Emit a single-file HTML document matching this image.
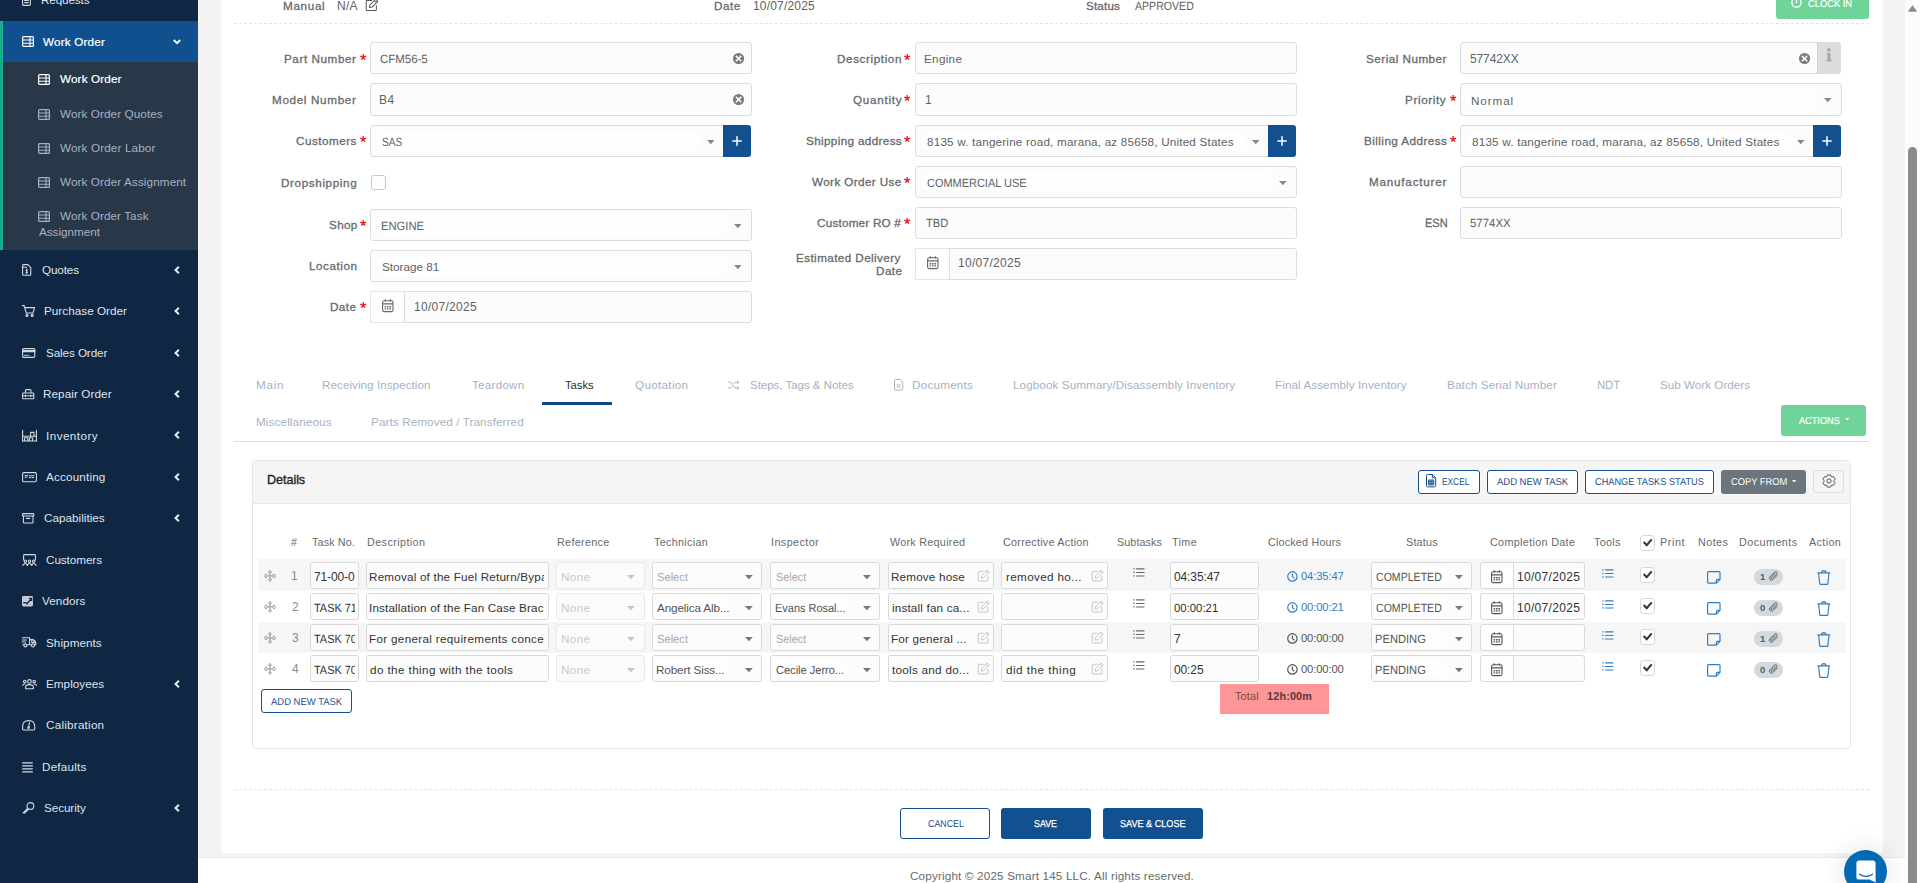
<!DOCTYPE html>
<html><head><meta charset="utf-8"><title>Work Order</title>
<style>
html,body{margin:0;padding:0;}
body{width:1920px;height:883px;overflow:hidden;position:relative;background:#f3f3f4;font-family:'Liberation Sans', sans-serif;}
#r{position:absolute;left:0;top:0;width:1920px;height:883px;overflow:hidden;}
#r div,#r span,#r svg{position:absolute;box-sizing:border-box;}
#r span{white-space:pre;line-height:1;font-family:'Liberation Sans', sans-serif;}
#r svg{overflow:visible;}
</style></head><body><div id="r">
<div style="left:0px;top:0px;width:198px;height:883px;background:#0f2743;"></div>
<div style="left:221px;top:0px;width:1662px;height:853px;background:#fff;"></div>
<div style="left:198px;top:857px;width:1707px;height:26px;background:#fff;border-top:1px solid #e7eaec;"></div>
<div style="left:1905px;top:0px;width:15px;height:883px;background:#fcfcfc;"></div>
<div style="left:1908px;top:147px;width:9px;height:760px;background:#8b8b8b;border-radius:5px;"></div>
<svg style="left:1908px;top:5px" width="9" height="7" viewBox="0 0 9 7" ><path d="M4.5 0.3 L8.8 6 Q9 6.8 8 6.8 L1 6.8 Q0 6.8 0.2 6 Z" fill="#8b8b8b"/></svg>
<div style="left:0px;top:21px;width:198px;height:41px;background:#11508f;"></div>
<div style="left:0px;top:62px;width:198px;height:188px;background:#283848;"></div>
<div style="left:0px;top:21px;width:3px;height:229px;background:#1aab8a;"></div>
<svg style="left:174.2px;top:265.7px" width="6" height="8" viewBox="0 0 6 8" ><path d="M4.9 0.7 L1.5 4 L4.9 7.3" fill="none" stroke="#e6eaf0" stroke-width="2.0" stroke-linecap="butt"/></svg>
<svg style="left:174.2px;top:307.09999999999997px" width="6" height="8" viewBox="0 0 6 8" ><path d="M4.9 0.7 L1.5 4 L4.9 7.3" fill="none" stroke="#e6eaf0" stroke-width="2.0" stroke-linecap="butt"/></svg>
<svg style="left:174.2px;top:348.5px" width="6" height="8" viewBox="0 0 6 8" ><path d="M4.9 0.7 L1.5 4 L4.9 7.3" fill="none" stroke="#e6eaf0" stroke-width="2.0" stroke-linecap="butt"/></svg>
<svg style="left:174.2px;top:389.9px" width="6" height="8" viewBox="0 0 6 8" ><path d="M4.9 0.7 L1.5 4 L4.9 7.3" fill="none" stroke="#e6eaf0" stroke-width="2.0" stroke-linecap="butt"/></svg>
<svg style="left:174.2px;top:431.3px" width="6" height="8" viewBox="0 0 6 8" ><path d="M4.9 0.7 L1.5 4 L4.9 7.3" fill="none" stroke="#e6eaf0" stroke-width="2.0" stroke-linecap="butt"/></svg>
<svg style="left:174.2px;top:472.7px" width="6" height="8" viewBox="0 0 6 8" ><path d="M4.9 0.7 L1.5 4 L4.9 7.3" fill="none" stroke="#e6eaf0" stroke-width="2.0" stroke-linecap="butt"/></svg>
<svg style="left:174.2px;top:514.1px" width="6" height="8" viewBox="0 0 6 8" ><path d="M4.9 0.7 L1.5 4 L4.9 7.3" fill="none" stroke="#e6eaf0" stroke-width="2.0" stroke-linecap="butt"/></svg>
<svg style="left:174.2px;top:679.7px" width="6" height="8" viewBox="0 0 6 8" ><path d="M4.9 0.7 L1.5 4 L4.9 7.3" fill="none" stroke="#e6eaf0" stroke-width="2.0" stroke-linecap="butt"/></svg>
<svg style="left:174.2px;top:803.9000000000001px" width="6" height="8" viewBox="0 0 6 8" ><path d="M4.9 0.7 L1.5 4 L4.9 7.3" fill="none" stroke="#e6eaf0" stroke-width="2.0" stroke-linecap="butt"/></svg>
<svg style="left:172.7px;top:38.9px" width="8" height="6" viewBox="0 0 8 6" ><path d="M0.8 1.0 L4 4.2 L7.2 1.0" fill="none" stroke="#fff" stroke-width="1.9"/></svg>
<svg style="left:22px;top:36px" width="12" height="11" viewBox="0 0 12 11" ><rect x="0.6" y="0.6" width="10.8" height="9.8" rx="1" fill="none" stroke="#fff" stroke-width="1.2"/><path d="M0.6 4 H11.4 M0.6 7.2 H11.4 M8 0.6 V10.4" stroke="#fff" stroke-width="1.1" fill="none"/></svg>
<svg style="left:38.2px;top:73.5px" width="12" height="11" viewBox="0 0 12 11" ><rect x="0.6" y="0.6" width="10.8" height="9.8" rx="1" fill="none" stroke="#fff" stroke-width="1.2"/><path d="M0.6 4 H11.4 M0.6 7.2 H11.4 M8 0.6 V10.4" stroke="#fff" stroke-width="1.1" fill="none"/></svg>
<svg style="left:38.2px;top:108.5px" width="12" height="11" viewBox="0 0 12 11" ><rect x="0.6" y="0.6" width="10.8" height="9.8" rx="1" fill="none" stroke="#a7b1c2" stroke-width="1.2"/><path d="M0.6 4 H11.4 M0.6 7.2 H11.4 M8 0.6 V10.4" stroke="#a7b1c2" stroke-width="1.1" fill="none"/></svg>
<svg style="left:38.2px;top:142.5px" width="12" height="11" viewBox="0 0 12 11" ><rect x="0.6" y="0.6" width="10.8" height="9.8" rx="1" fill="none" stroke="#a7b1c2" stroke-width="1.2"/><path d="M0.6 4 H11.4 M0.6 7.2 H11.4 M8 0.6 V10.4" stroke="#a7b1c2" stroke-width="1.1" fill="none"/></svg>
<svg style="left:38.2px;top:176.5px" width="12" height="11" viewBox="0 0 12 11" ><rect x="0.6" y="0.6" width="10.8" height="9.8" rx="1" fill="none" stroke="#a7b1c2" stroke-width="1.2"/><path d="M0.6 4 H11.4 M0.6 7.2 H11.4 M8 0.6 V10.4" stroke="#a7b1c2" stroke-width="1.1" fill="none"/></svg>
<svg style="left:38.2px;top:210.5px" width="12" height="11" viewBox="0 0 12 11" ><rect x="0.6" y="0.6" width="10.8" height="9.8" rx="1" fill="none" stroke="#a7b1c2" stroke-width="1.2"/><path d="M0.6 4 H11.4 M0.6 7.2 H11.4 M8 0.6 V10.4" stroke="#a7b1c2" stroke-width="1.1" fill="none"/></svg>
<svg style="left:22px;top:-6px" width="9" height="12" viewBox="0 0 9 12" ><g fill="none" stroke="#d3d9e3" stroke-width="1.1" stroke-linejoin="round" stroke-linecap="round"><rect x="0.6" y="0.6" width="7.8" height="10.8" rx="1.2"/><path d="M2.6 6.4 H6.4 M2.6 8.6 H6.4"/></g></svg>
<svg style="left:22px;top:264px" width="9.4" height="11.8" viewBox="0 0 9.4 11.8" ><g fill="none" stroke="#d3d9e3" stroke-width="1.1" stroke-linejoin="round" stroke-linecap="round"><path d="M1.6 0.6 H5.8 L8.8 3.6 V10.2 Q8.8 11.2 7.8 11.2 H1.6 Q0.6 11.2 0.6 10.2 V1.6 Q0.6 0.6 1.6 0.6 Z"/><path d="M1 3.2 H4.6" /><path d="M5.6 6.2 Q4.7 5.4 3.9 6 Q3.3 6.8 4.7 7.4 Q6.1 8 5.4 8.9 Q4.6 9.5 3.7 8.7 M4.7 5 V10" stroke-width="0.9"/></g></svg>
<svg style="left:22px;top:305px" width="13.4" height="12" viewBox="0 0 13.4 12" ><g fill="none" stroke="#d3d9e3" stroke-width="1.1" stroke-linejoin="round" stroke-linecap="round"><path d="M0.5 0.6 H2.2 L4.2 8 H11 L12.6 2.6 H3"/><circle cx="5" cy="10.4" r="1"/><circle cx="10.2" cy="10.4" r="1"/></g></svg>
<svg style="left:22px;top:348px" width="13.4" height="10" viewBox="0 0 13.4 10" ><g fill="none" stroke="#d3d9e3" stroke-width="1.1" stroke-linejoin="round" stroke-linecap="round"><rect x="0.6" y="0.6" width="12.2" height="8.8" rx="1.2"/><path d="M0.6 2.6 H12.8 M0.6 3.6 H12.8" stroke-width="1.3"/><path d="M2.4 7.2 H4.6 M5.8 7.2 H7"/></g></svg>
<svg style="left:22px;top:389px" width="12.4" height="10.4" viewBox="0 0 12.4 10.4" ><g fill="none" stroke="#d3d9e3" stroke-width="1.1" stroke-linejoin="round" stroke-linecap="round"><path d="M1.4 4 H11 Q11.8 4 11.8 4.8 V9 Q11.8 9.8 11 9.8 H1.4 Q0.6 9.8 0.6 9 V4.8 Q0.6 4 1.4 4 Z M3.4 4 V1.6 Q3.4 0.6 4.4 0.6 H8 Q9 0.6 9 1.6 V4 M0.6 6.8 H11.8 M3.6 6 V7.8 M8.8 6 V7.8"/></g></svg>
<svg style="left:22px;top:430px" width="15" height="11.6" viewBox="0 0 15 11.6" ><g fill="none" stroke="#d3d9e3" stroke-width="1.1" stroke-linejoin="round" stroke-linecap="round"><path d="M0.6 0.4 V11.2 M14.4 0.4 V11.2 M0.6 11 H14.4 M0.6 6.2 H14.4 M2.6 11 V7.8 H5.8 V11 M7.4 11 V7.8 H10.6 V11 M8.6 6.2 V2.4 H12 V6.2"/></g></svg>
<svg style="left:22px;top:472px" width="15" height="10.4" viewBox="0 0 15 10.4" ><g fill="none" stroke="#d3d9e3" stroke-width="1.1" stroke-linejoin="round" stroke-linecap="round"><rect x="0.6" y="0.6" width="13.8" height="9.2" rx="1.2"/><path d="M3 3.6 H6 M3 5.2 H5 M7.4 3.8 H12 M7.4 5.6 H8.8 M10.2 5.6 H11.6" stroke-width="1"/></g></svg>
<svg style="left:22px;top:513px" width="12.4" height="10.6" viewBox="0 0 12.4 10.6" ><g fill="none" stroke="#d3d9e3" stroke-width="1.1" stroke-linejoin="round" stroke-linecap="round"><rect x="0.6" y="0.6" width="11.2" height="2.4" rx="0.6"/><path d="M1.4 3 V9 Q1.4 10 2.4 10 H10 Q11 10 11 9 V3 M4.6 5.4 H7.8"/></g></svg>
<svg style="left:22px;top:554px" width="15" height="11.8" viewBox="0 0 15 11.8" ><g fill="none" stroke="#d3d9e3" stroke-width="1.1" stroke-linejoin="round" stroke-linecap="round"><path d="M1.6 6 V1.4 Q1.6 0.6 2.4 0.6 H12.6 Q13.4 0.6 13.4 1.4 V6"/><circle cx="3.4" cy="7.2" r="1.2"/><circle cx="7.5" cy="7.2" r="1.2"/><circle cx="11.6" cy="7.2" r="1.2"/><path d="M0.8 11.4 Q3.4 7.6 5.6 11.4 M5 11.4 Q7.5 7.6 10 11.4 M9.4 11.4 Q11.6 7.6 14.2 11.4"/></g></svg>
<svg style="left:22px;top:596px" width="11" height="10.4" viewBox="0 0 11 10.4" ><rect x="0" y="0" width="11" height="10.4" rx="1.4" fill="#c3cad6"/><path d="M1.2 6.6 L3.4 6.6 L5 7.8 L9.4 2.6 M7 2.4 H9.6 V5" fill="none" stroke="#0f2743" stroke-width="1.3"/></svg>
<svg style="left:22px;top:637.4px" width="14.4" height="10.6" viewBox="0 0 14.4 10.6" ><g fill="none" stroke="#d3d9e3" stroke-width="1.1" stroke-linejoin="round" stroke-linecap="round"><path d="M0.4 0.8 H7.6 V7.8 M0.4 3 H4.4 M0.4 5 H3.4 M7.6 2.6 H10.6 Q13.6 3.4 13.8 6.4 V7.8 H12.6 M7.6 7.8 H9.4 M1.8 7.8 H0.8 M5 7.8 H7.6 M9.8 2.8 V5.4 H13.4"/><circle cx="3.4" cy="8.4" r="1.5"/><circle cx="11" cy="8.4" r="1.5"/></g></svg>
<svg style="left:22px;top:679px" width="15" height="10.4" viewBox="0 0 15 10.4" ><g fill="none" stroke="#d3d9e3" stroke-width="1.1" stroke-linejoin="round" stroke-linecap="round"><circle cx="7.5" cy="2.4" r="1.8"/><circle cx="2.8" cy="2.6" r="1.3"/><circle cx="12.2" cy="2.6" r="1.3"/><path d="M3.6 9.8 V8 Q3.6 5.6 7.5 5.6 Q11.4 5.6 11.4 8 V9.8 Z M0.6 6.4 Q0.8 5 3 5 M14.4 6.4 Q14.2 5 12 5"/></g></svg>
<svg style="left:22px;top:720px" width="13.4" height="10.6" viewBox="0 0 13.4 10.6" ><g fill="none" stroke="#d3d9e3" stroke-width="1.1" stroke-linejoin="round" stroke-linecap="round"><path d="M1.6 10 H11.8 Q12.8 10 12.8 8.6 V7 Q12.8 0.6 6.7 0.6 Q0.6 0.6 0.6 7 V8.6 Q0.6 10 1.6 10 Z M7.4 2.6 L6.7 6.6"/><circle cx="6.6" cy="7.6" r="0.9"/></g></svg>
<svg style="left:22px;top:761.6px" width="11" height="10.6" viewBox="0 0 11 10.6" ><g fill="none" stroke="#d3d9e3" stroke-width="1.1" stroke-linejoin="round" stroke-linecap="round"><path d="M0.2 0.8 H10.8 M0.2 3.8 H10.8 M0.2 6.8 H10.8 M0.2 9.8 H10.8" stroke-width="1.3" stroke-linecap="butt"/></g></svg>
<svg style="left:22px;top:802.4px" width="12.4" height="11.6" viewBox="0 0 12.4 11.6" ><g fill="none" stroke="#d3d9e3" stroke-width="1.1" stroke-linejoin="round" stroke-linecap="round"><circle cx="8.4" cy="4" r="3.4"/><path d="M5.8 6.2 L1.2 10.8 V11 H3 V9.8 H4.2 V8.6 H5.2 L6.4 7.2"/></g></svg>
<svg style="left:364.7px;top:-1.9px" width="13.8" height="13.8" viewBox="0 0 16 16" ><path d="M13.2 8.6 V13.4 Q13.2 14.6 12 14.6 H2.6 Q1.4 14.6 1.4 13.4 V4 Q1.4 2.8 2.6 2.8 H7.6" fill="none" stroke="#555" stroke-width="1.16" stroke-linecap="round"/><path d="M12.3 1.2 L14.9 3.8 L8.2 10.5 L5.2 11 L5.7 8 Z M10.9 2.7 L13.4 5.2" fill="none" stroke="#555" stroke-width="1.16" stroke-linejoin="round"/></svg>
<div style="left:234px;top:23px;width:1635px;height:1px;border-top:1px dashed #e0e5e8;"></div>
<div style="left:1776px;top:-14px;width:93px;height:33px;background:#70d498;border-radius:3px;"></div>
<svg style="left:1790.8px;top:-3.5px" width="11" height="11" viewBox="0 0 11 11" ><circle cx="5.5" cy="5.5" r="4.6" fill="none" stroke="#fff" stroke-width="1.4"/><path d="M5.5 2.6 V5.8" stroke="#fff" stroke-width="1.4" stroke-linecap="round"/></svg>
<div style="left:370px;top:42px;width:382px;height:32px;background:#fcfcfc;border:1px solid #dcdddd;border-radius:3px;"></div>
<svg style="left:359.6px;top:53.8px" width="6.4" height="6.4" viewBox="0 0 6.4 6.4" ><path d="M3.2 3.2 L3.20 0.10 M3.2 3.2 L6.15 2.24 M3.2 3.2 L5.02 5.71 M3.2 3.2 L1.38 5.71 M3.2 3.2 L0.25 2.24 " stroke="#ed1c24" stroke-width="1.35" fill="none"/></svg>
<svg style="left:733.25px;top:52.75px" width="11.1" height="11.1" viewBox="0 0 11.1 11.1" ><circle cx="5.55" cy="5.55" r="5.55" fill="#7a7a7a"/><path d="M2.8499999999999996 2.8499999999999996 L8.25 8.25 M8.25 2.8499999999999996 L2.8499999999999996 8.25" stroke="#fff" stroke-width="1.55" stroke-linecap="butt"/></svg>
<div style="left:370px;top:83px;width:382px;height:33px;background:#fcfcfc;border:1px solid #dcdddd;border-radius:3px;"></div>
<svg style="left:733.25px;top:94.05px" width="11.1" height="11.1" viewBox="0 0 11.1 11.1" ><circle cx="5.55" cy="5.55" r="5.55" fill="#7a7a7a"/><path d="M2.8499999999999996 2.8499999999999996 L8.25 8.25 M8.25 2.8499999999999996 L2.8499999999999996 8.25" stroke="#fff" stroke-width="1.55" stroke-linecap="butt"/></svg>
<div style="left:370px;top:125px;width:355px;height:32px;background:#fcfcfc;border:1px solid #dcdddd;border-radius:3px;border-radius:3px 0 0 3px;"></div>
<div style="left:723px;top:125px;width:28px;height:32px;background:#12508f;border-radius:0 3px 3px 0;"></div>
<svg style="left:732px;top:135.5px" width="10" height="10" viewBox="0 0 10 10" ><path d="M5 0.3 V9.7 M0.3 5 H9.7" stroke="#fff" stroke-width="1.5" fill="none"/></svg>
<svg style="left:707.2px;top:140.20000000000002px" width="7.6" height="4.2" viewBox="0 0 7.6 4.2" ><path d="M0 0 H7.6 L3.8 4.2 Z" fill="#888"/></svg>
<div style="left:377px;top:131px;width:323px;height:20px;background:#fefefe;border-radius:8px;"></div>
<svg style="left:359.6px;top:135.8px" width="6.4" height="6.4" viewBox="0 0 6.4 6.4" ><path d="M3.2 3.2 L3.20 0.10 M3.2 3.2 L6.15 2.24 M3.2 3.2 L5.02 5.71 M3.2 3.2 L1.38 5.71 M3.2 3.2 L0.25 2.24 " stroke="#ed1c24" stroke-width="1.35" fill="none"/></svg>
<div style="left:371px;top:175px;width:15px;height:15px;background:#fff;border:1px solid #c9c9c9;border-radius:3px;"></div>
<div style="left:370px;top:209px;width:382px;height:32px;background:#fcfcfc;border:1px solid #dcdddd;border-radius:3px;"></div>
<svg style="left:734.2px;top:224.20000000000002px" width="7.6" height="4.2" viewBox="0 0 7.6 4.2" ><path d="M0 0 H7.6 L3.8 4.2 Z" fill="#888"/></svg>
<div style="left:377px;top:215px;width:351px;height:20px;background:#fefefe;border-radius:8px;"></div>
<svg style="left:359.6px;top:219.8px" width="6.4" height="6.4" viewBox="0 0 6.4 6.4" ><path d="M3.2 3.2 L3.20 0.10 M3.2 3.2 L6.15 2.24 M3.2 3.2 L5.02 5.71 M3.2 3.2 L1.38 5.71 M3.2 3.2 L0.25 2.24 " stroke="#ed1c24" stroke-width="1.35" fill="none"/></svg>
<div style="left:370px;top:250px;width:382px;height:32px;background:#fcfcfc;border:1px solid #dcdddd;border-radius:3px;"></div>
<svg style="left:734.2px;top:265.2px" width="7.6" height="4.2" viewBox="0 0 7.6 4.2" ><path d="M0 0 H7.6 L3.8 4.2 Z" fill="#888"/></svg>
<div style="left:377px;top:256px;width:351px;height:20px;background:#fefefe;border-radius:8px;"></div>
<div style="left:370px;top:291px;width:35px;height:32px;background:#fff;border:1px solid #e2e4e5;border-radius:1px 0 0 1px;"></div>
<div style="left:404px;top:291px;width:348px;height:32px;background:#fcfcfc;border:1px solid #dcdddd;border-radius:0 3px 3px 0;"></div>
<svg style="left:381.9px;top:298.9px" width="11.6" height="13.2" viewBox="0 0 11.6 13.2" ><rect x="0.6" y="1.8" width="10.4" height="10.8" rx="1.6" fill="none" stroke="#666" stroke-width="1.1"/><path d="M0.6 4.9 H11 M3.3 0.3 V2.6 M8.3 0.3 V2.6" stroke="#666" stroke-width="1.1" fill="none"/><path d="M2.6 7.1 h1.6 v1.3 h-1.6z M5 7.1 h1.6 v1.3 h-1.6z M7.4 7.1 h1.6 v1.3 h-1.6z M2.6 9.3 h1.6 v1.3 h-1.6z M5 9.3 h1.6 v1.3 h-1.6z M7.4 9.3 h1.6 v1.3 h-1.6z" fill="#666"/></svg>
<svg style="left:359.6px;top:301.5px" width="6.4" height="6.4" viewBox="0 0 6.4 6.4" ><path d="M3.2 3.2 L3.20 0.10 M3.2 3.2 L6.15 2.24 M3.2 3.2 L5.02 5.71 M3.2 3.2 L1.38 5.71 M3.2 3.2 L0.25 2.24 " stroke="#ed1c24" stroke-width="1.35" fill="none"/></svg>
<div style="left:915px;top:42px;width:382px;height:32px;background:#fcfcfc;border:1px solid #dcdddd;border-radius:3px;"></div>
<svg style="left:904.3px;top:53.8px" width="6.4" height="6.4" viewBox="0 0 6.4 6.4" ><path d="M3.2 3.2 L3.20 0.10 M3.2 3.2 L6.15 2.24 M3.2 3.2 L5.02 5.71 M3.2 3.2 L1.38 5.71 M3.2 3.2 L0.25 2.24 " stroke="#ed1c24" stroke-width="1.35" fill="none"/></svg>
<div style="left:915px;top:83px;width:382px;height:33px;background:#fcfcfc;border:1px solid #dcdddd;border-radius:3px;"></div>
<svg style="left:904.3px;top:94.8px" width="6.4" height="6.4" viewBox="0 0 6.4 6.4" ><path d="M3.2 3.2 L3.20 0.10 M3.2 3.2 L6.15 2.24 M3.2 3.2 L5.02 5.71 M3.2 3.2 L1.38 5.71 M3.2 3.2 L0.25 2.24 " stroke="#ed1c24" stroke-width="1.35" fill="none"/></svg>
<div style="left:915px;top:125px;width:355px;height:32px;background:#fcfcfc;border:1px solid #dcdddd;border-radius:3px;border-radius:3px 0 0 3px;"></div>
<div style="left:1268px;top:125px;width:28px;height:32px;background:#12508f;border-radius:0 3px 3px 0;"></div>
<svg style="left:1277px;top:135.5px" width="10" height="10" viewBox="0 0 10 10" ><path d="M5 0.3 V9.7 M0.3 5 H9.7" stroke="#fff" stroke-width="1.5" fill="none"/></svg>
<svg style="left:1252.2px;top:140.20000000000002px" width="7.6" height="4.2" viewBox="0 0 7.6 4.2" ><path d="M0 0 H7.6 L3.8 4.2 Z" fill="#888"/></svg>
<div style="left:922px;top:131px;width:323px;height:20px;background:#fefefe;border-radius:8px;"></div>
<svg style="left:904.3px;top:135.8px" width="6.4" height="6.4" viewBox="0 0 6.4 6.4" ><path d="M3.2 3.2 L3.20 0.10 M3.2 3.2 L6.15 2.24 M3.2 3.2 L5.02 5.71 M3.2 3.2 L1.38 5.71 M3.2 3.2 L0.25 2.24 " stroke="#ed1c24" stroke-width="1.35" fill="none"/></svg>
<div style="left:915px;top:166px;width:382px;height:32px;background:#fcfcfc;border:1px solid #dcdddd;border-radius:3px;"></div>
<svg style="left:1279.2px;top:181.20000000000002px" width="7.6" height="4.2" viewBox="0 0 7.6 4.2" ><path d="M0 0 H7.6 L3.8 4.2 Z" fill="#888"/></svg>
<div style="left:922px;top:172px;width:351px;height:20px;background:#fefefe;border-radius:8px;"></div>
<svg style="left:904.3px;top:176.8px" width="6.4" height="6.4" viewBox="0 0 6.4 6.4" ><path d="M3.2 3.2 L3.20 0.10 M3.2 3.2 L6.15 2.24 M3.2 3.2 L5.02 5.71 M3.2 3.2 L1.38 5.71 M3.2 3.2 L0.25 2.24 " stroke="#ed1c24" stroke-width="1.35" fill="none"/></svg>
<div style="left:915px;top:207px;width:382px;height:32px;background:#fcfcfc;border:1px solid #dcdddd;border-radius:3px;"></div>
<svg style="left:904.3px;top:217.8px" width="6.4" height="6.4" viewBox="0 0 6.4 6.4" ><path d="M3.2 3.2 L3.20 0.10 M3.2 3.2 L6.15 2.24 M3.2 3.2 L5.02 5.71 M3.2 3.2 L1.38 5.71 M3.2 3.2 L0.25 2.24 " stroke="#ed1c24" stroke-width="1.35" fill="none"/></svg>
<div style="left:915px;top:248px;width:35px;height:32px;background:#fff;border:1px solid #e2e4e5;border-radius:1px 0 0 1px;"></div>
<div style="left:949px;top:248px;width:348px;height:32px;background:#fcfcfc;border:1px solid #dcdddd;border-radius:0 3px 3px 0;"></div>
<svg style="left:926.9px;top:255.9px" width="11.6" height="13.2" viewBox="0 0 11.6 13.2" ><rect x="0.6" y="1.8" width="10.4" height="10.8" rx="1.6" fill="none" stroke="#666" stroke-width="1.1"/><path d="M0.6 4.9 H11 M3.3 0.3 V2.6 M8.3 0.3 V2.6" stroke="#666" stroke-width="1.1" fill="none"/><path d="M2.6 7.1 h1.6 v1.3 h-1.6z M5 7.1 h1.6 v1.3 h-1.6z M7.4 7.1 h1.6 v1.3 h-1.6z M2.6 9.3 h1.6 v1.3 h-1.6z M5 9.3 h1.6 v1.3 h-1.6z M7.4 9.3 h1.6 v1.3 h-1.6z" fill="#666"/></svg>
<div style="left:1460px;top:42px;width:358px;height:32px;background:#fcfcfc;border:1px solid #dcdddd;border-radius:3px;border-radius:3px 0 0 3px;"></div>
<div style="left:1817px;top:42px;width:24px;height:32px;background:#dddddd;border-left:1px solid #d2d2d2;border-radius:0 3px 3px 0;"></div>
<svg style="left:1799.05px;top:52.95px" width="11.1" height="11.1" viewBox="0 0 11.1 11.1" ><circle cx="5.55" cy="5.55" r="5.55" fill="#7a7a7a"/><path d="M2.8499999999999996 2.8499999999999996 L8.25 8.25 M8.25 2.8499999999999996 L2.8499999999999996 8.25" stroke="#fff" stroke-width="1.55" stroke-linecap="butt"/></svg>
<svg style="left:1826.3px;top:48.3px" width="6" height="13.8" viewBox="0 0 6 13.8" ><circle cx="2.95" cy="1.9" r="1.85" fill="#a8a8a8"/><path d="M0.8 5 H4.5 V11.2 H5.5 V13.4 H0.5 V11.2 H1.5 V7 H0.8 Z" fill="#a8a8a8"/></svg>
<div style="left:1460px;top:83px;width:382px;height:33px;background:#fcfcfc;border:1px solid #dcdddd;border-radius:3px;"></div>
<svg style="left:1824.2px;top:98.2px" width="7.6" height="4.2" viewBox="0 0 7.6 4.2" ><path d="M0 0 H7.6 L3.8 4.2 Z" fill="#888"/></svg>
<div style="left:1467px;top:89px;width:351px;height:21px;background:#fefefe;border-radius:8px;"></div>
<svg style="left:1449.75px;top:94.8px" width="6.4" height="6.4" viewBox="0 0 6.4 6.4" ><path d="M3.2 3.2 L3.20 0.10 M3.2 3.2 L6.15 2.24 M3.2 3.2 L5.02 5.71 M3.2 3.2 L1.38 5.71 M3.2 3.2 L0.25 2.24 " stroke="#ed1c24" stroke-width="1.35" fill="none"/></svg>
<div style="left:1460px;top:125px;width:355px;height:32px;background:#fcfcfc;border:1px solid #dcdddd;border-radius:3px;border-radius:3px 0 0 3px;"></div>
<div style="left:1813px;top:125px;width:28px;height:32px;background:#12508f;border-radius:0 3px 3px 0;"></div>
<svg style="left:1822px;top:135.5px" width="10" height="10" viewBox="0 0 10 10" ><path d="M5 0.3 V9.7 M0.3 5 H9.7" stroke="#fff" stroke-width="1.5" fill="none"/></svg>
<svg style="left:1797.2px;top:140.20000000000002px" width="7.6" height="4.2" viewBox="0 0 7.6 4.2" ><path d="M0 0 H7.6 L3.8 4.2 Z" fill="#888"/></svg>
<div style="left:1467px;top:131px;width:323px;height:20px;background:#fefefe;border-radius:8px;"></div>
<svg style="left:1449.75px;top:135.8px" width="6.4" height="6.4" viewBox="0 0 6.4 6.4" ><path d="M3.2 3.2 L3.20 0.10 M3.2 3.2 L6.15 2.24 M3.2 3.2 L5.02 5.71 M3.2 3.2 L1.38 5.71 M3.2 3.2 L0.25 2.24 " stroke="#ed1c24" stroke-width="1.35" fill="none"/></svg>
<div style="left:1460px;top:166px;width:382px;height:32px;background:#fcfcfc;border:1px solid #dcdddd;border-radius:3px;"></div>
<div style="left:1460px;top:207px;width:382px;height:32px;background:#fcfcfc;border:1px solid #dcdddd;border-radius:3px;"></div>
<div style="left:542px;top:402px;width:70px;height:3px;background:#0e4a86;"></div>
<div style="left:234px;top:441px;width:1635px;height:1px;background:#dcdcdc;"></div>
<svg style="left:728px;top:380px" width="12" height="10" viewBox="0 0 12 10" ><path d="M0.3 2.2 H2.6 L7 8 H10.6 M0.3 8 H2.6 L3.8 6.4 M5.8 3.8 L7 2.2 H10.6 M9.2 0.6 L10.9 2.2 L9.2 3.8 M9.2 6.4 L10.9 8 L9.2 9.6" fill="none" stroke="#a7b1c2" stroke-width="1"/></svg>
<svg style="left:894px;top:379px" width="9.2" height="11.6" viewBox="0 0 9.2 11.6" ><path d="M1.6 0.5 H6 L8.7 3.2 V10 Q8.7 11.1 7.6 11.1 H1.6 Q0.5 11.1 0.5 10 V1.6 Q0.5 0.5 1.6 0.5 Z" fill="none" stroke="#a7b1c2" stroke-width="1"/><path d="M2.6 6 H6.6 M2.6 8 H6.6" stroke="#a7b1c2" stroke-width="1"/></svg>
<div style="left:1781px;top:405px;width:85px;height:31px;background:#70d498;border-radius:3px;"></div>
<svg style="left:1845px;top:418.2px" width="4.4" height="2.4" viewBox="0 0 4.4 2.4" ><path d="M0 0 H4.4 L2.2 2.4 Z" fill="#fff"/></svg>
<div style="left:252px;top:460px;width:1599px;height:289px;background:#fff;border:1px solid #e4e7ea;border-radius:4px;"></div>
<div style="left:253px;top:461px;width:1597px;height:43px;background:#f5f5f5;border-bottom:1px solid #e7e7e7;border-radius:3px 3px 0 0;"></div>
<div style="left:1418px;top:470px;width:62px;height:24px;background:#fff;border:1px solid #12508f;border-radius:3px;"></div>
<div style="left:1487px;top:470px;width:91px;height:24px;background:#fff;border:1px solid #12508f;border-radius:3px;"></div>
<div style="left:1585px;top:470px;width:129px;height:24px;background:#fff;border:1px solid #12508f;border-radius:3px;"></div>
<div style="left:1721px;top:470px;width:85px;height:24px;background:#6c757d;border-radius:3px;"></div>
<div style="left:1813px;top:470px;width:31px;height:23px;background:#f5f5f5;border:1px solid #ddd;border-radius:3px;"></div>
<svg style="left:1791.75px;top:480px" width="4.4" height="2.4" viewBox="0 0 4.4 2.4" ><path d="M0 0 H4.4 L2.2 2.4 Z" fill="#fff"/></svg>
<svg style="left:1425.6px;top:473.6px" width="10.2" height="13.4" viewBox="0 0 10.2 13.4" ><path d="M1.6 0.5 H6.4 L9.7 3.8 V11.8 Q9.7 12.9 8.6 12.9 H1.6 Q0.5 12.9 0.5 11.8 V1.6 Q0.5 0.5 1.6 0.5 Z M6.4 0.5 V3.8 H9.7" fill="none" stroke="#1a4d8c" stroke-width="1"/><path d="M2.4 6 H7.8 V11 H2.4 Z M2.4 7.7 H7.8 M2.4 9.3 H7.8 M4.2 6 V11 M6 6 V11" fill="none" stroke="#1a4d8c" stroke-width="0.9"/></svg>
<svg style="left:1821.75px;top:474.2px" width="14" height="14" viewBox="0 0 14 14" ><path d="M5.44 0.90 L8.56 0.90 L9.13 2.59 L9.76 2.95 L11.51 2.60 L13.07 5.30 L11.89 6.64 L11.89 7.36 L13.07 8.70 L11.51 11.40 L9.76 11.05 L9.13 11.41 L8.56 13.10 L5.44 13.10 L4.87 11.41 L4.24 11.05 L2.49 11.40 L0.93 8.70 L2.11 7.36 L2.11 6.64 L0.93 5.30 L2.49 2.60 L4.24 2.95 L4.87 2.59 Z" fill="none" stroke="#555" stroke-width="1.0" stroke-linejoin="round"/><circle cx="7" cy="7" r="2.1" fill="none" stroke="#555" stroke-width="1.0"/></svg>
<div style="left:1640px;top:535px;width:15px;height:16px;background:#fff;border:1px solid #d3d6d9;border-radius:3.5px;"></div>
<svg style="left:1640px;top:535px" width="15" height="16" viewBox="0 0 15 16" ><path d="M3.7 7.1 L6.7 10.2 L11.7 4.4" fill="none" stroke="#353535" stroke-width="2.1"/></svg>
<div style="left:258px;top:559px;width:1588px;height:32px;background:#f6f6f6;"></div>
<svg style="left:264px;top:569.6px" width="12" height="11.8" viewBox="0 0 12 11.8" ><path d="M6 2 V9.8 M3.6 5.9 H8.4" stroke="#8c8c8c" stroke-width="0.9" fill="none"/><path d="M6 0.3 L7.5 2.2 L6 3.1 L4.5 2.2 Z M6 11.5 L7.5 9.6 L6 8.7 L4.5 9.6 Z" fill="none" stroke="#8c8c8c" stroke-width="0.8"/><ellipse cx="2.1" cy="5.9" rx="1.3" ry="1.7" fill="none" stroke="#8c8c8c" stroke-width="0.85"/><ellipse cx="9.9" cy="5.9" rx="1.3" ry="1.7" fill="none" stroke="#8c8c8c" stroke-width="0.85"/></svg>
<div style="left:310px;top:562px;width:49px;height:27px;background:#fcfcfc;border:1px solid #d9d9d9;border-radius:2.5px;"></div>
<div style="left:366px;top:562px;width:183px;height:27px;background:#fcfcfc;border:1px solid #d9d9d9;border-radius:2.5px;"></div>
<div style="left:556px;top:562px;width:89px;height:27px;background:#fbfbfb;border:1px solid #e9e9e9;border-radius:3px;"></div>
<svg style="left:627.1px;top:575.1px" width="7.8" height="4.2" viewBox="0 0 7.8 4.2" ><path d="M0 0 H7.8 L3.9 4.2 Z" fill="#c4c4c4"/></svg>
<div style="left:652px;top:562px;width:110px;height:27px;background:#fcfcfc;border:1px solid #d9d9d9;border-radius:2.5px;"></div>
<svg style="left:745.1px;top:575.1px" width="7.8" height="4.2" viewBox="0 0 7.8 4.2" ><path d="M0 0 H7.8 L3.9 4.2 Z" fill="#777"/></svg>
<div style="left:770px;top:562px;width:110px;height:27px;background:#fcfcfc;border:1px solid #d9d9d9;border-radius:2.5px;"></div>
<svg style="left:862.9px;top:575.1px" width="7.8" height="4.2" viewBox="0 0 7.8 4.2" ><path d="M0 0 H7.8 L3.9 4.2 Z" fill="#777"/></svg>
<div style="left:888px;top:562px;width:106px;height:27px;background:#fcfcfc;border:1px solid #d9d9d9;border-radius:2.5px;"></div>
<svg style="left:977px;top:568.8px" width="13.2" height="13.2" viewBox="0 0 16 16" ><path d="M13.2 8.6 V13.4 Q13.2 14.6 12 14.6 H2.6 Q1.4 14.6 1.4 13.4 V4 Q1.4 2.8 2.6 2.8 H7.6" fill="none" stroke="#c4c4c4" stroke-width="1.21" stroke-linecap="round"/><path d="M12.3 1.2 L14.9 3.8 L8.2 10.5 L5.2 11 L5.7 8 Z M10.9 2.7 L13.4 5.2" fill="none" stroke="#c4c4c4" stroke-width="1.21" stroke-linejoin="round"/></svg>
<div style="left:1001px;top:562px;width:107px;height:27px;background:#fcfcfc;border:1px solid #d9d9d9;border-radius:2.5px;"></div>
<svg style="left:1090.6px;top:568.8px" width="13.2" height="13.2" viewBox="0 0 16 16" ><path d="M13.2 8.6 V13.4 Q13.2 14.6 12 14.6 H2.6 Q1.4 14.6 1.4 13.4 V4 Q1.4 2.8 2.6 2.8 H7.6" fill="none" stroke="#c4c4c4" stroke-width="1.21" stroke-linecap="round"/><path d="M12.3 1.2 L14.9 3.8 L8.2 10.5 L5.2 11 L5.7 8 Z M10.9 2.7 L13.4 5.2" fill="none" stroke="#c4c4c4" stroke-width="1.21" stroke-linejoin="round"/></svg>
<svg style="left:1133.4px;top:568.2px" width="11.6" height="9.2" viewBox="0 0 11.6 9.2" ><path d="M3.1 0.9 H11.5 M3.1 4.45 H11.5 M3.1 8.0 H11.5" stroke="#666" stroke-width="1.05" fill="none"/><path d="M0.3 0.9 H1.6 M0.3 4.45 H1.6 M0.3 8.0 H1.6" stroke="#666" stroke-width="1.25" fill="none"/></svg>
<div style="left:1170px;top:562px;width:89px;height:27px;background:#fcfcfc;border:1px solid #d9d9d9;border-radius:2.5px;"></div>
<svg style="left:1286.8px;top:570.5px" width="10.8" height="10.8" viewBox="0 0 10.8 10.8" ><circle cx="5.4" cy="5.4" r="4.7" fill="none" stroke="#2f7ec4" stroke-width="1.15"/><path d="M5.4 2.4 V5.6 L7.4 7.2" fill="none" stroke="#2f7ec4" stroke-width="1.15"/></svg>
<div style="left:1371px;top:562px;width:101px;height:27px;background:#fcfcfc;border:1px solid #d9d9d9;border-radius:2.5px;"></div>
<svg style="left:1455.1px;top:575.1px" width="7.8" height="4.2" viewBox="0 0 7.8 4.2" ><path d="M0 0 H7.8 L3.9 4.2 Z" fill="#777"/></svg>
<div style="left:1374px;top:567px;width:72px;height:17px;background:#fefefe;border-radius:6px;"></div>
<div style="left:1480px;top:562px;width:34px;height:27px;background:#fff;border:1px solid #d9d9d9;border-radius:3px 0 0 3px;"></div>
<div style="left:1513px;top:562px;width:72px;height:27px;background:#fcfcfc;border:1px solid #d9d9d9;border-radius:0 3px 3px 0;"></div>
<svg style="left:1490.8px;top:570.2px" width="11.6" height="13.2" viewBox="0 0 11.6 13.2" ><rect x="0.6" y="1.8" width="10.4" height="10.8" rx="1.6" fill="none" stroke="#555" stroke-width="1.1"/><path d="M0.6 4.9 H11 M3.3 0.3 V2.6 M8.3 0.3 V2.6" stroke="#555" stroke-width="1.1" fill="none"/><path d="M2.6 7.1 h1.6 v1.3 h-1.6z M5 7.1 h1.6 v1.3 h-1.6z M7.4 7.1 h1.6 v1.3 h-1.6z M2.6 9.3 h1.6 v1.3 h-1.6z M5 9.3 h1.6 v1.3 h-1.6z M7.4 9.3 h1.6 v1.3 h-1.6z" fill="#555"/></svg>
<svg style="left:1602.2px;top:569.4px" width="11.6" height="9.2" viewBox="0 0 11.6 9.2" ><path d="M3.1 0.9 H11.5 M3.1 4.45 H11.5 M3.1 8.0 H11.5" stroke="#2f7ec4" stroke-width="1.1" fill="none"/><path d="M0.3 0.9 H1.6 M0.3 4.45 H1.6 M0.3 8.0 H1.6" stroke="#2f7ec4" stroke-width="1.25" fill="none"/></svg>
<div style="left:1640px;top:567px;width:15px;height:16px;background:#fff;border:1px solid #d3d6d9;border-radius:3.5px;"></div>
<svg style="left:1640px;top:567px" width="15" height="16" viewBox="0 0 15 16" ><path d="M3.7 7.1 L6.7 10.2 L11.7 4.4" fill="none" stroke="#353535" stroke-width="2.1"/></svg>
<svg style="left:1707.4px;top:570.8px" width="13.6" height="12.8" viewBox="0 0 13.6 12.8" ><path d="M1.6 0.6 H12 Q13 0.6 13 1.6 V8.4 L9.4 12.2 H1.6 Q0.6 12.2 0.6 11.2 V1.6 Q0.6 0.6 1.6 0.6 Z M13 8.4 H10.4 Q9.4 8.4 9.4 9.4 V12.2" fill="none" stroke="#2f7ec4" stroke-width="1.2" stroke-linejoin="round"/></svg>
<div style="left:1754px;top:569px;width:29px;height:16px;background:#d1dade;border-radius:8px;"></div>
<svg style="left:1767.8px;top:571.4px" width="10.4" height="10.4" viewBox="0 0 10.4 10.4" ><path d="M9.3 4.2 L4.9 8.6 Q3.4 10 2 8.6 Q0.6 7.2 2 5.7 L6.6 1.1 Q7.6 0.2 8.6 1.1 Q9.5 2.1 8.6 3.1 L4.3 7.4 Q3.7 7.9 3.2 7.4 Q2.7 6.9 3.2 6.3 L7.2 2.3" fill="none" stroke="#5e5e5e" stroke-width="0.95" stroke-linecap="round"/></svg>
<svg style="left:1817.4px;top:569.6px" width="13.6" height="15" viewBox="0 0 13.6 15" ><path d="M0.4 2.9 H13.2 M4.6 2.7 Q4.6 0.6 6.8 0.6 Q9 0.6 9 2.7 M1.6 3 L2.7 13.4 Q2.8 14.4 3.8 14.4 H9.8 Q10.8 14.4 10.9 13.4 L12 3" fill="none" stroke="#2f7ec4" stroke-width="1.15" stroke-linejoin="round"/></svg>
<svg style="left:264px;top:600.6px" width="12" height="11.8" viewBox="0 0 12 11.8" ><path d="M6 2 V9.8 M3.6 5.9 H8.4" stroke="#8c8c8c" stroke-width="0.9" fill="none"/><path d="M6 0.3 L7.5 2.2 L6 3.1 L4.5 2.2 Z M6 11.5 L7.5 9.6 L6 8.7 L4.5 9.6 Z" fill="none" stroke="#8c8c8c" stroke-width="0.8"/><ellipse cx="2.1" cy="5.9" rx="1.3" ry="1.7" fill="none" stroke="#8c8c8c" stroke-width="0.85"/><ellipse cx="9.9" cy="5.9" rx="1.3" ry="1.7" fill="none" stroke="#8c8c8c" stroke-width="0.85"/></svg>
<div style="left:310px;top:593px;width:49px;height:27px;background:#fcfcfc;border:1px solid #d9d9d9;border-radius:2.5px;"></div>
<div style="left:366px;top:593px;width:183px;height:27px;background:#fcfcfc;border:1px solid #d9d9d9;border-radius:2.5px;"></div>
<div style="left:556px;top:593px;width:89px;height:27px;background:#fbfbfb;border:1px solid #e9e9e9;border-radius:3px;"></div>
<svg style="left:627.1px;top:606.1px" width="7.8" height="4.2" viewBox="0 0 7.8 4.2" ><path d="M0 0 H7.8 L3.9 4.2 Z" fill="#c4c4c4"/></svg>
<div style="left:652px;top:593px;width:110px;height:27px;background:#fcfcfc;border:1px solid #d9d9d9;border-radius:2.5px;"></div>
<svg style="left:745.1px;top:606.1px" width="7.8" height="4.2" viewBox="0 0 7.8 4.2" ><path d="M0 0 H7.8 L3.9 4.2 Z" fill="#777"/></svg>
<div style="left:655px;top:598px;width:73px;height:17px;background:#fefefe;border-radius:6px;"></div>
<div style="left:770px;top:593px;width:110px;height:27px;background:#fcfcfc;border:1px solid #d9d9d9;border-radius:2.5px;"></div>
<svg style="left:862.9px;top:606.1px" width="7.8" height="4.2" viewBox="0 0 7.8 4.2" ><path d="M0 0 H7.8 L3.9 4.2 Z" fill="#777"/></svg>
<div style="left:773px;top:598px;width:73px;height:17px;background:#fefefe;border-radius:6px;"></div>
<div style="left:888px;top:593px;width:106px;height:27px;background:#fcfcfc;border:1px solid #d9d9d9;border-radius:2.5px;"></div>
<svg style="left:977px;top:599.8px" width="13.2" height="13.2" viewBox="0 0 16 16" ><path d="M13.2 8.6 V13.4 Q13.2 14.6 12 14.6 H2.6 Q1.4 14.6 1.4 13.4 V4 Q1.4 2.8 2.6 2.8 H7.6" fill="none" stroke="#c4c4c4" stroke-width="1.21" stroke-linecap="round"/><path d="M12.3 1.2 L14.9 3.8 L8.2 10.5 L5.2 11 L5.7 8 Z M10.9 2.7 L13.4 5.2" fill="none" stroke="#c4c4c4" stroke-width="1.21" stroke-linejoin="round"/></svg>
<div style="left:1001px;top:593px;width:107px;height:27px;background:#fcfcfc;border:1px solid #d9d9d9;border-radius:2.5px;"></div>
<svg style="left:1090.6px;top:599.8px" width="13.2" height="13.2" viewBox="0 0 16 16" ><path d="M13.2 8.6 V13.4 Q13.2 14.6 12 14.6 H2.6 Q1.4 14.6 1.4 13.4 V4 Q1.4 2.8 2.6 2.8 H7.6" fill="none" stroke="#c4c4c4" stroke-width="1.21" stroke-linecap="round"/><path d="M12.3 1.2 L14.9 3.8 L8.2 10.5 L5.2 11 L5.7 8 Z M10.9 2.7 L13.4 5.2" fill="none" stroke="#c4c4c4" stroke-width="1.21" stroke-linejoin="round"/></svg>
<svg style="left:1133.4px;top:599.2px" width="11.6" height="9.2" viewBox="0 0 11.6 9.2" ><path d="M3.1 0.9 H11.5 M3.1 4.45 H11.5 M3.1 8.0 H11.5" stroke="#666" stroke-width="1.05" fill="none"/><path d="M0.3 0.9 H1.6 M0.3 4.45 H1.6 M0.3 8.0 H1.6" stroke="#666" stroke-width="1.25" fill="none"/></svg>
<div style="left:1170px;top:593px;width:89px;height:27px;background:#fcfcfc;border:1px solid #d9d9d9;border-radius:2.5px;"></div>
<svg style="left:1286.8px;top:601.5px" width="10.8" height="10.8" viewBox="0 0 10.8 10.8" ><circle cx="5.4" cy="5.4" r="4.7" fill="none" stroke="#2f7ec4" stroke-width="1.15"/><path d="M5.4 2.4 V5.6 L7.4 7.2" fill="none" stroke="#2f7ec4" stroke-width="1.15"/></svg>
<div style="left:1371px;top:593px;width:101px;height:27px;background:#fcfcfc;border:1px solid #d9d9d9;border-radius:2.5px;"></div>
<svg style="left:1455.1px;top:606.1px" width="7.8" height="4.2" viewBox="0 0 7.8 4.2" ><path d="M0 0 H7.8 L3.9 4.2 Z" fill="#777"/></svg>
<div style="left:1374px;top:598px;width:72px;height:17px;background:#fefefe;border-radius:6px;"></div>
<div style="left:1480px;top:593px;width:34px;height:27px;background:#fff;border:1px solid #d9d9d9;border-radius:3px 0 0 3px;"></div>
<div style="left:1513px;top:593px;width:72px;height:27px;background:#fcfcfc;border:1px solid #d9d9d9;border-radius:0 3px 3px 0;"></div>
<svg style="left:1490.8px;top:601.2px" width="11.6" height="13.2" viewBox="0 0 11.6 13.2" ><rect x="0.6" y="1.8" width="10.4" height="10.8" rx="1.6" fill="none" stroke="#555" stroke-width="1.1"/><path d="M0.6 4.9 H11 M3.3 0.3 V2.6 M8.3 0.3 V2.6" stroke="#555" stroke-width="1.1" fill="none"/><path d="M2.6 7.1 h1.6 v1.3 h-1.6z M5 7.1 h1.6 v1.3 h-1.6z M7.4 7.1 h1.6 v1.3 h-1.6z M2.6 9.3 h1.6 v1.3 h-1.6z M5 9.3 h1.6 v1.3 h-1.6z M7.4 9.3 h1.6 v1.3 h-1.6z" fill="#555"/></svg>
<svg style="left:1602.2px;top:600.4px" width="11.6" height="9.2" viewBox="0 0 11.6 9.2" ><path d="M3.1 0.9 H11.5 M3.1 4.45 H11.5 M3.1 8.0 H11.5" stroke="#2f7ec4" stroke-width="1.1" fill="none"/><path d="M0.3 0.9 H1.6 M0.3 4.45 H1.6 M0.3 8.0 H1.6" stroke="#2f7ec4" stroke-width="1.25" fill="none"/></svg>
<div style="left:1640px;top:598px;width:15px;height:16px;background:#fff;border:1px solid #d3d6d9;border-radius:3.5px;"></div>
<svg style="left:1640px;top:598px" width="15" height="16" viewBox="0 0 15 16" ><path d="M3.7 7.1 L6.7 10.2 L11.7 4.4" fill="none" stroke="#353535" stroke-width="2.1"/></svg>
<svg style="left:1707.4px;top:601.8px" width="13.6" height="12.8" viewBox="0 0 13.6 12.8" ><path d="M1.6 0.6 H12 Q13 0.6 13 1.6 V8.4 L9.4 12.2 H1.6 Q0.6 12.2 0.6 11.2 V1.6 Q0.6 0.6 1.6 0.6 Z M13 8.4 H10.4 Q9.4 8.4 9.4 9.4 V12.2" fill="none" stroke="#2f7ec4" stroke-width="1.2" stroke-linejoin="round"/></svg>
<div style="left:1754px;top:600px;width:29px;height:16px;background:#d1dade;border-radius:8px;"></div>
<svg style="left:1767.8px;top:602.4px" width="10.4" height="10.4" viewBox="0 0 10.4 10.4" ><path d="M9.3 4.2 L4.9 8.6 Q3.4 10 2 8.6 Q0.6 7.2 2 5.7 L6.6 1.1 Q7.6 0.2 8.6 1.1 Q9.5 2.1 8.6 3.1 L4.3 7.4 Q3.7 7.9 3.2 7.4 Q2.7 6.9 3.2 6.3 L7.2 2.3" fill="none" stroke="#5e5e5e" stroke-width="0.95" stroke-linecap="round"/></svg>
<svg style="left:1817.4px;top:600.6px" width="13.6" height="15" viewBox="0 0 13.6 15" ><path d="M0.4 2.9 H13.2 M4.6 2.7 Q4.6 0.6 6.8 0.6 Q9 0.6 9 2.7 M1.6 3 L2.7 13.4 Q2.8 14.4 3.8 14.4 H9.8 Q10.8 14.4 10.9 13.4 L12 3" fill="none" stroke="#2f7ec4" stroke-width="1.15" stroke-linejoin="round"/></svg>
<div style="left:258px;top:622px;width:1588px;height:31px;background:#f6f6f6;"></div>
<svg style="left:264px;top:631.6px" width="12" height="11.8" viewBox="0 0 12 11.8" ><path d="M6 2 V9.8 M3.6 5.9 H8.4" stroke="#8c8c8c" stroke-width="0.9" fill="none"/><path d="M6 0.3 L7.5 2.2 L6 3.1 L4.5 2.2 Z M6 11.5 L7.5 9.6 L6 8.7 L4.5 9.6 Z" fill="none" stroke="#8c8c8c" stroke-width="0.8"/><ellipse cx="2.1" cy="5.9" rx="1.3" ry="1.7" fill="none" stroke="#8c8c8c" stroke-width="0.85"/><ellipse cx="9.9" cy="5.9" rx="1.3" ry="1.7" fill="none" stroke="#8c8c8c" stroke-width="0.85"/></svg>
<div style="left:310px;top:624px;width:49px;height:27px;background:#fcfcfc;border:1px solid #d9d9d9;border-radius:2.5px;"></div>
<div style="left:366px;top:624px;width:183px;height:27px;background:#fcfcfc;border:1px solid #d9d9d9;border-radius:2.5px;"></div>
<div style="left:556px;top:624px;width:89px;height:27px;background:#fbfbfb;border:1px solid #e9e9e9;border-radius:3px;"></div>
<svg style="left:627.1px;top:637.1px" width="7.8" height="4.2" viewBox="0 0 7.8 4.2" ><path d="M0 0 H7.8 L3.9 4.2 Z" fill="#c4c4c4"/></svg>
<div style="left:652px;top:624px;width:110px;height:27px;background:#fcfcfc;border:1px solid #d9d9d9;border-radius:2.5px;"></div>
<svg style="left:745.1px;top:637.1px" width="7.8" height="4.2" viewBox="0 0 7.8 4.2" ><path d="M0 0 H7.8 L3.9 4.2 Z" fill="#777"/></svg>
<div style="left:770px;top:624px;width:110px;height:27px;background:#fcfcfc;border:1px solid #d9d9d9;border-radius:2.5px;"></div>
<svg style="left:862.9px;top:637.1px" width="7.8" height="4.2" viewBox="0 0 7.8 4.2" ><path d="M0 0 H7.8 L3.9 4.2 Z" fill="#777"/></svg>
<div style="left:888px;top:624px;width:106px;height:27px;background:#fcfcfc;border:1px solid #d9d9d9;border-radius:2.5px;"></div>
<svg style="left:977px;top:630.8px" width="13.2" height="13.2" viewBox="0 0 16 16" ><path d="M13.2 8.6 V13.4 Q13.2 14.6 12 14.6 H2.6 Q1.4 14.6 1.4 13.4 V4 Q1.4 2.8 2.6 2.8 H7.6" fill="none" stroke="#c4c4c4" stroke-width="1.21" stroke-linecap="round"/><path d="M12.3 1.2 L14.9 3.8 L8.2 10.5 L5.2 11 L5.7 8 Z M10.9 2.7 L13.4 5.2" fill="none" stroke="#c4c4c4" stroke-width="1.21" stroke-linejoin="round"/></svg>
<div style="left:1001px;top:624px;width:107px;height:27px;background:#fcfcfc;border:1px solid #d9d9d9;border-radius:2.5px;"></div>
<svg style="left:1090.6px;top:630.8px" width="13.2" height="13.2" viewBox="0 0 16 16" ><path d="M13.2 8.6 V13.4 Q13.2 14.6 12 14.6 H2.6 Q1.4 14.6 1.4 13.4 V4 Q1.4 2.8 2.6 2.8 H7.6" fill="none" stroke="#c4c4c4" stroke-width="1.21" stroke-linecap="round"/><path d="M12.3 1.2 L14.9 3.8 L8.2 10.5 L5.2 11 L5.7 8 Z M10.9 2.7 L13.4 5.2" fill="none" stroke="#c4c4c4" stroke-width="1.21" stroke-linejoin="round"/></svg>
<svg style="left:1133.4px;top:630.2px" width="11.6" height="9.2" viewBox="0 0 11.6 9.2" ><path d="M3.1 0.9 H11.5 M3.1 4.45 H11.5 M3.1 8.0 H11.5" stroke="#666" stroke-width="1.05" fill="none"/><path d="M0.3 0.9 H1.6 M0.3 4.45 H1.6 M0.3 8.0 H1.6" stroke="#666" stroke-width="1.25" fill="none"/></svg>
<div style="left:1170px;top:624px;width:89px;height:27px;background:#fcfcfc;border:1px solid #d9d9d9;border-radius:2.5px;"></div>
<svg style="left:1286.8px;top:632.5px" width="10.8" height="10.8" viewBox="0 0 10.8 10.8" ><circle cx="5.4" cy="5.4" r="4.7" fill="none" stroke="#555555" stroke-width="1.15"/><path d="M5.4 2.4 V5.6 L7.4 7.2" fill="none" stroke="#555555" stroke-width="1.15"/></svg>
<div style="left:1371px;top:624px;width:101px;height:27px;background:#fcfcfc;border:1px solid #d9d9d9;border-radius:2.5px;"></div>
<svg style="left:1455.1px;top:637.1px" width="7.8" height="4.2" viewBox="0 0 7.8 4.2" ><path d="M0 0 H7.8 L3.9 4.2 Z" fill="#777"/></svg>
<div style="left:1374px;top:629px;width:72px;height:17px;background:#fefefe;border-radius:6px;"></div>
<div style="left:1480px;top:624px;width:34px;height:27px;background:#fff;border:1px solid #d9d9d9;border-radius:3px 0 0 3px;"></div>
<div style="left:1513px;top:624px;width:72px;height:27px;background:#fcfcfc;border:1px solid #d9d9d9;border-radius:0 3px 3px 0;"></div>
<svg style="left:1490.8px;top:632.2px" width="11.6" height="13.2" viewBox="0 0 11.6 13.2" ><rect x="0.6" y="1.8" width="10.4" height="10.8" rx="1.6" fill="none" stroke="#555" stroke-width="1.1"/><path d="M0.6 4.9 H11 M3.3 0.3 V2.6 M8.3 0.3 V2.6" stroke="#555" stroke-width="1.1" fill="none"/><path d="M2.6 7.1 h1.6 v1.3 h-1.6z M5 7.1 h1.6 v1.3 h-1.6z M7.4 7.1 h1.6 v1.3 h-1.6z M2.6 9.3 h1.6 v1.3 h-1.6z M5 9.3 h1.6 v1.3 h-1.6z M7.4 9.3 h1.6 v1.3 h-1.6z" fill="#555"/></svg>
<svg style="left:1602.2px;top:631.4px" width="11.6" height="9.2" viewBox="0 0 11.6 9.2" ><path d="M3.1 0.9 H11.5 M3.1 4.45 H11.5 M3.1 8.0 H11.5" stroke="#2f7ec4" stroke-width="1.1" fill="none"/><path d="M0.3 0.9 H1.6 M0.3 4.45 H1.6 M0.3 8.0 H1.6" stroke="#2f7ec4" stroke-width="1.25" fill="none"/></svg>
<div style="left:1640px;top:629px;width:15px;height:16px;background:#fff;border:1px solid #d3d6d9;border-radius:3.5px;"></div>
<svg style="left:1640px;top:629px" width="15" height="16" viewBox="0 0 15 16" ><path d="M3.7 7.1 L6.7 10.2 L11.7 4.4" fill="none" stroke="#353535" stroke-width="2.1"/></svg>
<svg style="left:1707.4px;top:632.8px" width="13.6" height="12.8" viewBox="0 0 13.6 12.8" ><path d="M1.6 0.6 H12 Q13 0.6 13 1.6 V8.4 L9.4 12.2 H1.6 Q0.6 12.2 0.6 11.2 V1.6 Q0.6 0.6 1.6 0.6 Z M13 8.4 H10.4 Q9.4 8.4 9.4 9.4 V12.2" fill="none" stroke="#2f7ec4" stroke-width="1.2" stroke-linejoin="round"/></svg>
<div style="left:1754px;top:631px;width:29px;height:16px;background:#d1dade;border-radius:8px;"></div>
<svg style="left:1767.8px;top:633.4px" width="10.4" height="10.4" viewBox="0 0 10.4 10.4" ><path d="M9.3 4.2 L4.9 8.6 Q3.4 10 2 8.6 Q0.6 7.2 2 5.7 L6.6 1.1 Q7.6 0.2 8.6 1.1 Q9.5 2.1 8.6 3.1 L4.3 7.4 Q3.7 7.9 3.2 7.4 Q2.7 6.9 3.2 6.3 L7.2 2.3" fill="none" stroke="#5e5e5e" stroke-width="0.95" stroke-linecap="round"/></svg>
<svg style="left:1817.4px;top:631.6px" width="13.6" height="15" viewBox="0 0 13.6 15" ><path d="M0.4 2.9 H13.2 M4.6 2.7 Q4.6 0.6 6.8 0.6 Q9 0.6 9 2.7 M1.6 3 L2.7 13.4 Q2.8 14.4 3.8 14.4 H9.8 Q10.8 14.4 10.9 13.4 L12 3" fill="none" stroke="#2f7ec4" stroke-width="1.15" stroke-linejoin="round"/></svg>
<svg style="left:264px;top:662.6px" width="12" height="11.8" viewBox="0 0 12 11.8" ><path d="M6 2 V9.8 M3.6 5.9 H8.4" stroke="#8c8c8c" stroke-width="0.9" fill="none"/><path d="M6 0.3 L7.5 2.2 L6 3.1 L4.5 2.2 Z M6 11.5 L7.5 9.6 L6 8.7 L4.5 9.6 Z" fill="none" stroke="#8c8c8c" stroke-width="0.8"/><ellipse cx="2.1" cy="5.9" rx="1.3" ry="1.7" fill="none" stroke="#8c8c8c" stroke-width="0.85"/><ellipse cx="9.9" cy="5.9" rx="1.3" ry="1.7" fill="none" stroke="#8c8c8c" stroke-width="0.85"/></svg>
<div style="left:310px;top:655px;width:49px;height:27px;background:#fcfcfc;border:1px solid #d9d9d9;border-radius:2.5px;"></div>
<div style="left:366px;top:655px;width:183px;height:27px;background:#fcfcfc;border:1px solid #d9d9d9;border-radius:2.5px;"></div>
<div style="left:556px;top:655px;width:89px;height:27px;background:#fbfbfb;border:1px solid #e9e9e9;border-radius:3px;"></div>
<svg style="left:627.1px;top:668.1px" width="7.8" height="4.2" viewBox="0 0 7.8 4.2" ><path d="M0 0 H7.8 L3.9 4.2 Z" fill="#c4c4c4"/></svg>
<div style="left:652px;top:655px;width:110px;height:27px;background:#fcfcfc;border:1px solid #d9d9d9;border-radius:2.5px;"></div>
<svg style="left:745.1px;top:668.1px" width="7.8" height="4.2" viewBox="0 0 7.8 4.2" ><path d="M0 0 H7.8 L3.9 4.2 Z" fill="#777"/></svg>
<div style="left:655px;top:660px;width:73px;height:17px;background:#fefefe;border-radius:6px;"></div>
<div style="left:770px;top:655px;width:110px;height:27px;background:#fcfcfc;border:1px solid #d9d9d9;border-radius:2.5px;"></div>
<svg style="left:862.9px;top:668.1px" width="7.8" height="4.2" viewBox="0 0 7.8 4.2" ><path d="M0 0 H7.8 L3.9 4.2 Z" fill="#777"/></svg>
<div style="left:773px;top:660px;width:73px;height:17px;background:#fefefe;border-radius:6px;"></div>
<div style="left:888px;top:655px;width:106px;height:27px;background:#fcfcfc;border:1px solid #d9d9d9;border-radius:2.5px;"></div>
<svg style="left:977px;top:661.8px" width="13.2" height="13.2" viewBox="0 0 16 16" ><path d="M13.2 8.6 V13.4 Q13.2 14.6 12 14.6 H2.6 Q1.4 14.6 1.4 13.4 V4 Q1.4 2.8 2.6 2.8 H7.6" fill="none" stroke="#c4c4c4" stroke-width="1.21" stroke-linecap="round"/><path d="M12.3 1.2 L14.9 3.8 L8.2 10.5 L5.2 11 L5.7 8 Z M10.9 2.7 L13.4 5.2" fill="none" stroke="#c4c4c4" stroke-width="1.21" stroke-linejoin="round"/></svg>
<div style="left:1001px;top:655px;width:107px;height:27px;background:#fcfcfc;border:1px solid #d9d9d9;border-radius:2.5px;"></div>
<svg style="left:1090.6px;top:661.8px" width="13.2" height="13.2" viewBox="0 0 16 16" ><path d="M13.2 8.6 V13.4 Q13.2 14.6 12 14.6 H2.6 Q1.4 14.6 1.4 13.4 V4 Q1.4 2.8 2.6 2.8 H7.6" fill="none" stroke="#c4c4c4" stroke-width="1.21" stroke-linecap="round"/><path d="M12.3 1.2 L14.9 3.8 L8.2 10.5 L5.2 11 L5.7 8 Z M10.9 2.7 L13.4 5.2" fill="none" stroke="#c4c4c4" stroke-width="1.21" stroke-linejoin="round"/></svg>
<svg style="left:1133.4px;top:661.2px" width="11.6" height="9.2" viewBox="0 0 11.6 9.2" ><path d="M3.1 0.9 H11.5 M3.1 4.45 H11.5 M3.1 8.0 H11.5" stroke="#666" stroke-width="1.05" fill="none"/><path d="M0.3 0.9 H1.6 M0.3 4.45 H1.6 M0.3 8.0 H1.6" stroke="#666" stroke-width="1.25" fill="none"/></svg>
<div style="left:1170px;top:655px;width:89px;height:27px;background:#fcfcfc;border:1px solid #d9d9d9;border-radius:2.5px;"></div>
<svg style="left:1286.8px;top:663.5px" width="10.8" height="10.8" viewBox="0 0 10.8 10.8" ><circle cx="5.4" cy="5.4" r="4.7" fill="none" stroke="#555555" stroke-width="1.15"/><path d="M5.4 2.4 V5.6 L7.4 7.2" fill="none" stroke="#555555" stroke-width="1.15"/></svg>
<div style="left:1371px;top:655px;width:101px;height:27px;background:#fcfcfc;border:1px solid #d9d9d9;border-radius:2.5px;"></div>
<svg style="left:1455.1px;top:668.1px" width="7.8" height="4.2" viewBox="0 0 7.8 4.2" ><path d="M0 0 H7.8 L3.9 4.2 Z" fill="#777"/></svg>
<div style="left:1374px;top:660px;width:72px;height:17px;background:#fefefe;border-radius:6px;"></div>
<div style="left:1480px;top:655px;width:34px;height:27px;background:#fff;border:1px solid #d9d9d9;border-radius:3px 0 0 3px;"></div>
<div style="left:1513px;top:655px;width:72px;height:27px;background:#fcfcfc;border:1px solid #d9d9d9;border-radius:0 3px 3px 0;"></div>
<svg style="left:1490.8px;top:663.2px" width="11.6" height="13.2" viewBox="0 0 11.6 13.2" ><rect x="0.6" y="1.8" width="10.4" height="10.8" rx="1.6" fill="none" stroke="#555" stroke-width="1.1"/><path d="M0.6 4.9 H11 M3.3 0.3 V2.6 M8.3 0.3 V2.6" stroke="#555" stroke-width="1.1" fill="none"/><path d="M2.6 7.1 h1.6 v1.3 h-1.6z M5 7.1 h1.6 v1.3 h-1.6z M7.4 7.1 h1.6 v1.3 h-1.6z M2.6 9.3 h1.6 v1.3 h-1.6z M5 9.3 h1.6 v1.3 h-1.6z M7.4 9.3 h1.6 v1.3 h-1.6z" fill="#555"/></svg>
<svg style="left:1602.2px;top:662.4px" width="11.6" height="9.2" viewBox="0 0 11.6 9.2" ><path d="M3.1 0.9 H11.5 M3.1 4.45 H11.5 M3.1 8.0 H11.5" stroke="#2f7ec4" stroke-width="1.1" fill="none"/><path d="M0.3 0.9 H1.6 M0.3 4.45 H1.6 M0.3 8.0 H1.6" stroke="#2f7ec4" stroke-width="1.25" fill="none"/></svg>
<div style="left:1640px;top:660px;width:15px;height:16px;background:#fff;border:1px solid #d3d6d9;border-radius:3.5px;"></div>
<svg style="left:1640px;top:660px" width="15" height="16" viewBox="0 0 15 16" ><path d="M3.7 7.1 L6.7 10.2 L11.7 4.4" fill="none" stroke="#353535" stroke-width="2.1"/></svg>
<svg style="left:1707.4px;top:663.8px" width="13.6" height="12.8" viewBox="0 0 13.6 12.8" ><path d="M1.6 0.6 H12 Q13 0.6 13 1.6 V8.4 L9.4 12.2 H1.6 Q0.6 12.2 0.6 11.2 V1.6 Q0.6 0.6 1.6 0.6 Z M13 8.4 H10.4 Q9.4 8.4 9.4 9.4 V12.2" fill="none" stroke="#2f7ec4" stroke-width="1.2" stroke-linejoin="round"/></svg>
<div style="left:1754px;top:662px;width:29px;height:16px;background:#d1dade;border-radius:8px;"></div>
<svg style="left:1767.8px;top:664.4px" width="10.4" height="10.4" viewBox="0 0 10.4 10.4" ><path d="M9.3 4.2 L4.9 8.6 Q3.4 10 2 8.6 Q0.6 7.2 2 5.7 L6.6 1.1 Q7.6 0.2 8.6 1.1 Q9.5 2.1 8.6 3.1 L4.3 7.4 Q3.7 7.9 3.2 7.4 Q2.7 6.9 3.2 6.3 L7.2 2.3" fill="none" stroke="#5e5e5e" stroke-width="0.95" stroke-linecap="round"/></svg>
<svg style="left:1817.4px;top:662.6px" width="13.6" height="15" viewBox="0 0 13.6 15" ><path d="M0.4 2.9 H13.2 M4.6 2.7 Q4.6 0.6 6.8 0.6 Q9 0.6 9 2.7 M1.6 3 L2.7 13.4 Q2.8 14.4 3.8 14.4 H9.8 Q10.8 14.4 10.9 13.4 L12 3" fill="none" stroke="#2f7ec4" stroke-width="1.15" stroke-linejoin="round"/></svg>
<div style="left:261px;top:689px;width:91px;height:24px;background:#fff;border:1px solid #12508f;border-radius:3px;"></div>
<div style="left:1220px;top:684px;width:109px;height:30px;background:#fe9596;"></div>
<div style="left:234px;top:789px;width:1635px;height:1px;border-top:1px dashed #e0e5e8;"></div>
<div style="left:900px;top:808px;width:90px;height:31px;background:#fff;border:1px solid #12508f;border-radius:3px;"></div>
<div style="left:1001px;top:808px;width:90px;height:31px;background:#12508f;border-radius:3px;"></div>
<div style="left:1103px;top:808px;width:100px;height:31px;background:#12508f;border-radius:3px;"></div>
<span style="left:41px;top:-6px;color:#dfe4ec;font-size:11.7px;letter-spacing:-0.120px;">Requests</span>
<span style="left:43px;top:36px;color:#ffffff;font-size:11.7px;-webkit-text-stroke:0.2px currentColor;letter-spacing:0.189px;">Work Order</span>
<span style="left:60px;top:73px;color:#ffffff;font-size:11.7px;-webkit-text-stroke:0.2px currentColor;letter-spacing:0.138px;">Work Order</span>
<span style="left:60px;top:108px;color:#a7b1c2;font-size:11.7px;letter-spacing:0.098px;">Work Order Quotes</span>
<span style="left:60px;top:142px;color:#a7b1c2;font-size:11.7px;letter-spacing:0.136px;">Work Order Labor</span>
<span style="left:60px;top:176px;color:#a7b1c2;font-size:11.7px;letter-spacing:0.114px;">Work Order Assignment</span>
<span style="left:60px;top:210px;color:#a7b1c2;font-size:11.7px;letter-spacing:0.089px;">Work Order Task</span>
<span style="left:39px;top:226px;color:#a7b1c2;font-size:11.7px;letter-spacing:-0.021px;">Assignment</span>
<span style="left:42px;top:264px;color:#dfe4ec;font-size:11.7px;letter-spacing:-0.120px;">Quotes</span>
<span style="left:44px;top:305px;color:#dfe4ec;font-size:11.7px;letter-spacing:0.038px;">Purchase Order</span>
<span style="left:46px;top:347px;color:#dfe4ec;font-size:11.7px;letter-spacing:-0.100px;">Sales Order</span>
<span style="left:43px;top:388px;color:#dfe4ec;font-size:11.7px;letter-spacing:0.091px;">Repair Order</span>
<span style="left:46px;top:430px;color:#dfe4ec;font-size:11.7px;letter-spacing:0.439px;">Inventory</span>
<span style="left:46px;top:471px;color:#dfe4ec;font-size:11.7px;letter-spacing:0.167px;">Accounting</span>
<span style="left:44px;top:512px;color:#dfe4ec;font-size:11.7px;letter-spacing:0.022px;">Capabilities</span>
<span style="left:46px;top:554px;color:#dfe4ec;font-size:11.7px;letter-spacing:-0.061px;">Customers</span>
<span style="left:42px;top:595px;color:#dfe4ec;font-size:11.7px;letter-spacing:0.083px;">Vendors</span>
<span style="left:46px;top:637px;color:#dfe4ec;font-size:11.7px;letter-spacing:0.061px;">Shipments</span>
<span style="left:46px;top:678px;color:#dfe4ec;font-size:11.7px;letter-spacing:0.032px;">Employees</span>
<span style="left:46px;top:719px;color:#dfe4ec;font-size:11.7px;letter-spacing:0.225px;">Calibration</span>
<span style="left:42px;top:761px;color:#dfe4ec;font-size:11.7px;letter-spacing:0.214px;">Defaults</span>
<span style="left:44px;top:802px;color:#dfe4ec;font-size:11.7px;letter-spacing:-0.071px;">Security</span>
<span style="left:283px;top:0px;color:#676a6c;font-size:11.7px;-webkit-text-stroke:0.3px currentColor;letter-spacing:0.660px;">Manual</span>
<span style="left:337px;top:0px;color:#606264;font-size:12.0px;letter-spacing:0.275px;">N/A</span>
<span style="left:714px;top:0px;color:#676a6c;font-size:11.7px;-webkit-text-stroke:0.3px currentColor;letter-spacing:0.500px;">Date</span>
<span style="left:753px;top:0px;color:#606264;font-size:12.0px;letter-spacing:0.189px;">10/07/2025</span>
<span style="left:1086px;top:0px;color:#676a6c;font-size:11.7px;-webkit-text-stroke:0.3px currentColor;letter-spacing:0.160px;">Status</span>
<span style="left:1135px;top:0px;color:#606264;font-size:12.0px;transform:scaleX(0.8821) rotate(0.03deg);transform-origin:0 0;">APPROVED</span>
<span style="left:1808px;top:-1px;color:#ffffff;font-size:10.0px;-webkit-text-stroke:0.2px currentColor;transform:scaleX(0.9319) rotate(0.03deg);transform-origin:0 0;">CLOCK IN</span>
<span style="left:284px;top:53px;color:#676a6c;font-size:11.7px;-webkit-text-stroke:0.3px currentColor;letter-spacing:0.570px;">Part Number</span>
<span style="left:380px;top:53px;color:#606264;font-size:12.0px;transform:scaleX(0.954) rotate(0.03deg);transform-origin:0 0;">CFM56-5</span>
<span style="left:272px;top:94px;color:#676a6c;font-size:11.7px;-webkit-text-stroke:0.3px currentColor;letter-spacing:0.654px;">Model Number</span>
<span style="left:379px;top:94px;color:#606264;font-size:12.0px;letter-spacing:0.500px;">B4</span>
<span style="left:296px;top:135px;color:#676a6c;font-size:11.7px;-webkit-text-stroke:0.3px currentColor;letter-spacing:0.489px;">Customers</span>
<span style="left:382px;top:136px;color:#606264;font-size:12.0px;transform:scaleX(0.8375) rotate(0.03deg);transform-origin:0 0;">SAS</span>
<span style="left:281px;top:177px;color:#676a6c;font-size:11.7px;-webkit-text-stroke:0.3px currentColor;letter-spacing:0.619px;">Dropshipping</span>
<span style="left:329px;top:219px;color:#676a6c;font-size:11.7px;-webkit-text-stroke:0.3px currentColor;letter-spacing:0.333px;">Shop</span>
<span style="left:381px;top:220px;color:#606264;font-size:12.0px;transform:scaleX(0.9333) rotate(0.03deg);transform-origin:0 0;">ENGINE</span>
<span style="left:309px;top:260px;color:#676a6c;font-size:11.7px;-webkit-text-stroke:0.3px currentColor;letter-spacing:0.543px;">Location</span>
<span style="left:382px;top:261px;color:#606264;font-size:11.7px;">Storage 81</span>
<span style="left:330px;top:301px;color:#676a6c;font-size:11.7px;-webkit-text-stroke:0.3px currentColor;letter-spacing:0.433px;">Date</span>
<span style="left:414px;top:301px;color:#606264;font-size:12.0px;letter-spacing:0.288px;">10/07/2025</span>
<span style="left:837px;top:53px;color:#676a6c;font-size:11.7px;-webkit-text-stroke:0.3px currentColor;letter-spacing:0.600px;">Description</span>
<span style="left:924px;top:53px;color:#606264;font-size:11.7px;letter-spacing:0.300px;">Engine</span>
<span style="left:853px;top:94px;color:#676a6c;font-size:11.7px;-webkit-text-stroke:0.3px currentColor;letter-spacing:0.728px;">Quantity</span>
<span style="left:925px;top:94px;color:#606264;font-size:12.0px;">1</span>
<span style="left:806px;top:135px;color:#676a6c;font-size:11.7px;-webkit-text-stroke:0.3px currentColor;letter-spacing:0.360px;">Shipping address</span>
<span style="left:927px;top:136px;color:#606264;font-size:11.7px;letter-spacing:0.191px;">8135 w. tangerine road, marana, az 85658, United States</span>
<span style="left:812px;top:176px;color:#676a6c;font-size:11.7px;-webkit-text-stroke:0.3px currentColor;letter-spacing:0.392px;">Work Order Use</span>
<span style="left:927px;top:177px;color:#606264;font-size:12.0px;transform:scaleX(0.9138) rotate(0.03deg);transform-origin:0 0;">COMMERCIAL USE</span>
<span style="left:817px;top:217px;color:#676a6c;font-size:11.7px;-webkit-text-stroke:0.3px currentColor;letter-spacing:0.220px;">Customer RO #</span>
<span style="left:926px;top:217px;color:#606264;font-size:12.0px;transform:scaleX(0.925) rotate(0.03deg);transform-origin:0 0;">TBD</span>
<span style="left:796px;top:252px;color:#676a6c;font-size:11.7px;-webkit-text-stroke:0.3px currentColor;letter-spacing:0.412px;">Estimated Delivery</span>
<span style="left:876px;top:265px;color:#676a6c;font-size:11.7px;-webkit-text-stroke:0.3px currentColor;letter-spacing:0.467px;">Date</span>
<span style="left:958px;top:257px;color:#606264;font-size:12.0px;letter-spacing:0.278px;">10/07/2025</span>
<span style="left:1366px;top:53px;color:#676a6c;font-size:11.7px;-webkit-text-stroke:0.3px currentColor;letter-spacing:0.480px;">Serial Number</span>
<span style="left:1470px;top:53px;color:#606264;font-size:12.0px;letter-spacing:-0.120px;">57742XX</span>
<span style="left:1405px;top:94px;color:#676a6c;font-size:11.7px;-webkit-text-stroke:0.3px currentColor;letter-spacing:0.621px;">Priority</span>
<span style="left:1471px;top:95px;color:#606264;font-size:11.7px;letter-spacing:0.900px;">Normal</span>
<span style="left:1364px;top:135px;color:#676a6c;font-size:11.7px;-webkit-text-stroke:0.3px currentColor;letter-spacing:0.447px;">Billing Address</span>
<span style="left:1472px;top:136px;color:#606264;font-size:11.7px;letter-spacing:0.205px;">8135 w. tangerine road, marana, az 85658, United States</span>
<span style="left:1369px;top:176px;color:#676a6c;font-size:11.7px;-webkit-text-stroke:0.3px currentColor;letter-spacing:0.777px;">Manufacturer</span>
<span style="left:1425px;top:217px;color:#676a6c;font-size:12.0px;-webkit-text-stroke:0.3px currentColor;transform:scaleX(0.9187) rotate(0.03deg);transform-origin:0 0;">ESN</span>
<span style="left:1470px;top:217px;color:#606264;font-size:12.0px;transform:scaleX(0.9512) rotate(0.03deg);transform-origin:0 0;">5774XX</span>
<span style="left:256px;top:379px;color:#a7b1c2;font-size:11.7px;letter-spacing:0.700px;">Main</span>
<span style="left:322px;top:379px;color:#a7b1c2;font-size:11.7px;letter-spacing:0.032px;">Receiving Inspection</span>
<span style="left:472px;top:379px;color:#a7b1c2;font-size:11.7px;letter-spacing:0.229px;">Teardown</span>
<span style="left:635px;top:379px;color:#a7b1c2;font-size:11.7px;letter-spacing:0.300px;">Quotation</span>
<span style="left:750px;top:379px;color:#a7b1c2;font-size:11.7px;letter-spacing:-0.111px;">Steps, Tags &amp; Notes</span>
<span style="left:912px;top:379px;color:#a7b1c2;font-size:11.7px;letter-spacing:0.225px;">Documents</span>
<span style="left:1013px;top:379px;color:#a7b1c2;font-size:11.7px;letter-spacing:0.090px;">Logbook Summary/Disassembly Inventory</span>
<span style="left:1275px;top:379px;color:#a7b1c2;font-size:11.7px;letter-spacing:0.076px;">Final Assembly Inventory</span>
<span style="left:1447px;top:379px;color:#a7b1c2;font-size:11.7px;letter-spacing:0.111px;">Batch Serial Number</span>
<span style="left:1597px;top:379px;color:#a7b1c2;font-size:12.0px;transform:scaleX(0.9375) rotate(0.03deg);transform-origin:0 0;">NDT</span>
<span style="left:1660px;top:379px;color:#a7b1c2;font-size:11.7px;">Sub Work Orders</span>
<span style="left:565px;top:379px;color:#333333;font-size:11.7px;transform:scaleX(0.9567) rotate(0.03deg);transform-origin:0 0;">Tasks</span>
<span style="left:256px;top:416px;color:#a7b1c2;font-size:11.7px;letter-spacing:0.125px;">Miscellaneous</span>
<span style="left:371px;top:416px;color:#a7b1c2;font-size:11.7px;letter-spacing:0.101px;">Parts Removed / Transferred</span>
<span style="left:1799px;top:416px;color:#ffffff;font-size:10.0px;-webkit-text-stroke:0.2px currentColor;transform:scaleX(0.9167) rotate(0.03deg);transform-origin:0 0;">ACTIONS</span>
<span style="left:267px;top:474px;color:#222222;font-size:12.6px;-webkit-text-stroke:0.35px currentColor;letter-spacing:-0.054px;">Details</span>
<span style="left:1442px;top:477px;color:#1a4d8c;font-size:10.0px;transform:scaleX(0.8333) rotate(0.03deg);transform-origin:0 0;">EXCEL</span>
<span style="left:1497px;top:477px;color:#1a4d8c;font-size:10.0px;transform:scaleX(0.9467) rotate(0.03deg);transform-origin:0 0;">ADD NEW TASK</span>
<span style="left:1595px;top:477px;color:#1a4d8c;font-size:10.0px;transform:scaleX(0.9216) rotate(0.03deg);transform-origin:0 0;">CHANGE TASKS STATUS</span>
<span style="left:1731px;top:477px;color:#ffffff;font-size:10.0px;transform:scaleX(0.9333) rotate(0.03deg);transform-origin:0 0;">COPY FROM</span>
<span style="left:291px;top:537px;color:#676a6c;font-size:10.8px;letter-spacing:1.100px;">#</span>
<span style="left:312px;top:537px;color:#676a6c;font-size:10.8px;letter-spacing:0.115px;">Task No.</span>
<span style="left:367px;top:537px;color:#676a6c;font-size:10.8px;letter-spacing:0.400px;">Description</span>
<span style="left:557px;top:537px;color:#676a6c;font-size:10.8px;letter-spacing:0.300px;">Reference</span>
<span style="left:654px;top:537px;color:#676a6c;font-size:10.8px;letter-spacing:0.300px;">Technician</span>
<span style="left:771px;top:537px;color:#676a6c;font-size:10.8px;letter-spacing:0.411px;">Inspector</span>
<span style="left:890px;top:537px;color:#676a6c;font-size:10.8px;letter-spacing:0.258px;">Work Required</span>
<span style="left:1003px;top:537px;color:#676a6c;font-size:10.8px;letter-spacing:0.250px;">Corrective Action</span>
<span style="left:1117px;top:537px;color:#676a6c;font-size:10.8px;letter-spacing:0.056px;">Subtasks</span>
<span style="left:1172px;top:537px;color:#676a6c;font-size:10.8px;letter-spacing:0.367px;">Time</span>
<span style="left:1268px;top:537px;color:#676a6c;font-size:10.8px;letter-spacing:0.175px;">Clocked Hours</span>
<span style="left:1406px;top:537px;color:#676a6c;font-size:10.8px;letter-spacing:0.210px;">Status</span>
<span style="left:1490px;top:537px;color:#676a6c;font-size:10.8px;letter-spacing:0.321px;">Completion Date</span>
<span style="left:1594px;top:537px;color:#676a6c;font-size:10.8px;letter-spacing:0.314px;">Tools</span>
<span style="left:1660px;top:537px;color:#676a6c;font-size:10.8px;letter-spacing:0.562px;">Print</span>
<span style="left:1698px;top:537px;color:#676a6c;font-size:10.8px;letter-spacing:0.438px;">Notes</span>
<span style="left:1739px;top:537px;color:#676a6c;font-size:10.8px;letter-spacing:0.438px;">Documents</span>
<span style="left:1809px;top:537px;color:#676a6c;font-size:10.8px;letter-spacing:0.350px;">Action</span>
<span style="left:291px;top:570px;color:#8a8a8a;font-size:12.0px;">1</span>
<span style="left:314px;top:571px;color:#333333;font-size:12.0px;letter-spacing:-0.120px;">71-00-0</span>
<span style="left:369px;top:571px;color:#333333;font-size:11.7px;letter-spacing:0.190px;width:175.2px;overflow:hidden;">Removal of the Fuel Return/Bypass</span>
<span style="left:561px;top:571px;color:#c9c9c9;font-size:11.7px;letter-spacing:0.366px;">None</span>
<span style="left:657px;top:571px;color:#aaaaaa;font-size:11.7px;transform:scaleX(0.9545) rotate(0.03deg);transform-origin:0 0;">Select</span>
<span style="left:776px;top:571px;color:#aaaaaa;font-size:11.7px;transform:scaleX(0.9333) rotate(0.03deg);transform-origin:0 0;">Select</span>
<span style="left:891px;top:571px;color:#333333;font-size:11.7px;letter-spacing:0.170px;">Remove hose</span>
<span style="left:1006px;top:571px;color:#333333;font-size:11.7px;letter-spacing:0.333px;">removed ho...</span>
<span style="left:1174px;top:571px;color:#333333;font-size:12.0px;letter-spacing:-0.120px;">04:35:47</span>
<span style="left:1301px;top:571px;color:#2f7ec4;font-size:11.200000000000001px;letter-spacing:-0.120px;">04:35:47</span>
<span style="left:1376px;top:571px;color:#555555;font-size:12.0px;transform:scaleX(0.8813) rotate(0.03deg);transform-origin:0 0;">COMPLETED</span>
<span style="left:1517px;top:571px;color:#333333;font-size:12.0px;letter-spacing:0.312px;">10/07/2025</span>
<span style="left:1760px;top:572px;color:#5a5a5a;font-size:9.5px;font-weight:700;">1</span>
<span style="left:292px;top:601px;color:#8a8a8a;font-size:12.0px;">2</span>
<span style="left:314px;top:602px;color:#333333;font-size:12.0px;transform:scaleX(0.91) rotate(0.03deg);transform-origin:0 0;width:45.3px;overflow:hidden;">TASK 71</span>
<span style="left:369px;top:602px;color:#333333;font-size:11.7px;letter-spacing:0.156px;width:175.2px;overflow:hidden;">Installation of the Fan Case Bracket</span>
<span style="left:561px;top:602px;color:#c9c9c9;font-size:11.7px;letter-spacing:0.366px;">None</span>
<span style="left:657px;top:602px;color:#555555;font-size:11.7px;letter-spacing:-0.120px;">Angelica Alb...</span>
<span style="left:775px;top:602px;color:#555555;font-size:11.7px;transform:scaleX(0.9378) rotate(0.03deg);transform-origin:0 0;">Evans Rosal...</span>
<span style="left:892px;top:602px;color:#333333;font-size:11.7px;letter-spacing:0.169px;">install fan ca...</span>
<span style="left:1174px;top:602px;color:#333333;font-size:12.0px;transform:scaleX(0.9468) rotate(0.03deg);transform-origin:0 0;">00:00:21</span>
<span style="left:1301px;top:602px;color:#2f7ec4;font-size:11.200000000000001px;letter-spacing:-0.120px;">00:00:21</span>
<span style="left:1376px;top:602px;color:#555555;font-size:12.0px;transform:scaleX(0.8813) rotate(0.03deg);transform-origin:0 0;">COMPLETED</span>
<span style="left:1517px;top:602px;color:#333333;font-size:12.0px;letter-spacing:0.312px;">10/07/2025</span>
<span style="left:1760px;top:603px;color:#5a5a5a;font-size:9.5px;font-weight:700;">0</span>
<span style="left:292px;top:632px;color:#8a8a8a;font-size:12.0px;">3</span>
<span style="left:314px;top:633px;color:#333333;font-size:12.0px;transform:scaleX(0.91) rotate(0.03deg);transform-origin:0 0;width:45.3px;overflow:hidden;">TASK 70</span>
<span style="left:369px;top:633px;color:#333333;font-size:11.7px;letter-spacing:0.314px;width:175.2px;overflow:hidden;">For general requirements concerning</span>
<span style="left:561px;top:633px;color:#c9c9c9;font-size:11.7px;letter-spacing:0.366px;">None</span>
<span style="left:657px;top:633px;color:#aaaaaa;font-size:11.7px;transform:scaleX(0.9545) rotate(0.03deg);transform-origin:0 0;">Select</span>
<span style="left:776px;top:633px;color:#aaaaaa;font-size:11.7px;transform:scaleX(0.9333) rotate(0.03deg);transform-origin:0 0;">Select</span>
<span style="left:891px;top:633px;color:#333333;font-size:11.7px;letter-spacing:0.200px;">For general ...</span>
<span style="left:1174px;top:633px;color:#333333;font-size:12.0px;">7</span>
<span style="left:1301px;top:633px;color:#555555;font-size:11.200000000000001px;letter-spacing:-0.120px;">00:00:00</span>
<span style="left:1375px;top:633px;color:#555555;font-size:12.0px;transform:scaleX(0.9302) rotate(0.03deg);transform-origin:0 0;">PENDING</span>
<span style="left:1760px;top:634px;color:#5a5a5a;font-size:9.5px;font-weight:700;">1</span>
<span style="left:292px;top:663px;color:#8a8a8a;font-size:12.0px;">4</span>
<span style="left:314px;top:664px;color:#333333;font-size:12.0px;transform:scaleX(0.91) rotate(0.03deg);transform-origin:0 0;width:45.3px;overflow:hidden;">TASK 70</span>
<span style="left:370px;top:664px;color:#333333;font-size:11.7px;letter-spacing:0.400px;">do the thing with the tools</span>
<span style="left:561px;top:664px;color:#c9c9c9;font-size:11.7px;letter-spacing:0.366px;">None</span>
<span style="left:656px;top:664px;color:#555555;font-size:11.7px;letter-spacing:-0.120px;">Robert Siss...</span>
<span style="left:776px;top:664px;color:#555555;font-size:11.7px;transform:scaleX(0.9451) rotate(0.03deg);transform-origin:0 0;">Cecile Jerro...</span>
<span style="left:892px;top:664px;color:#333333;font-size:11.7px;letter-spacing:0.271px;">tools and do...</span>
<span style="left:1006px;top:664px;color:#333333;font-size:11.7px;letter-spacing:0.500px;">did the thing</span>
<span style="left:1174px;top:664px;color:#333333;font-size:12.0px;letter-spacing:-0.120px;">00:25</span>
<span style="left:1301px;top:664px;color:#555555;font-size:11.200000000000001px;letter-spacing:-0.120px;">00:00:00</span>
<span style="left:1375px;top:664px;color:#555555;font-size:12.0px;transform:scaleX(0.9302) rotate(0.03deg);transform-origin:0 0;">PENDING</span>
<span style="left:1760px;top:665px;color:#5a5a5a;font-size:9.5px;font-weight:700;">0</span>
<span style="left:271px;top:697px;color:#1a4d8c;font-size:10.0px;transform:scaleX(0.9467) rotate(0.03deg);transform-origin:0 0;">ADD NEW TASK</span>
<span style="left:1235px;top:691px;color:#7b4a4c;font-size:10.8px;letter-spacing:0.225px;">Total</span>
<span style="left:1267px;top:691px;color:#54383a;font-size:10.8px;font-weight:700;letter-spacing:0.184px;">12h:00m</span>
<span style="left:928px;top:819px;color:#1a4d8c;font-size:10.0px;transform:scaleX(0.8841) rotate(0.03deg);transform-origin:0 0;">CANCEL</span>
<span style="left:1034px;top:819px;color:#ffffff;font-size:10.0px;-webkit-text-stroke:0.25px currentColor;transform:scaleX(0.8846) rotate(0.03deg);transform-origin:0 0;">SAVE</span>
<span style="left:1120px;top:819px;color:#ffffff;font-size:10.0px;-webkit-text-stroke:0.25px currentColor;transform:scaleX(0.9097) rotate(0.03deg);transform-origin:0 0;">SAVE &amp; CLOSE</span>
<span style="left:910px;top:870px;color:#676a6c;font-size:11.7px;letter-spacing:0.162px;">Copyright © 2025 Smart 145 LLC. All rights reserved.</span>
<div style="left:1844px;top:850px;width:43px;height:43px;background:#006bb4;border-radius:50%;box-shadow:0 0 22px 6px rgba(0,0,0,0.07);"></div>
<svg style="left:1855.5px;top:860.4px" width="20.5" height="23" viewBox="0 0 20.5 23" ><path d="M3 0.4 H16.6 Q19.6 0.4 19.6 3.4 V22.4 L13.4 19.6 H3 Q0.4 19.6 0.4 17 V3.4 Q0.4 0.4 3 0.4 Z" fill="#fff"/><path d="M3.6 14.2 Q10 18.6 16.4 14.2" fill="none" stroke="#006bb4" stroke-width="1.3" stroke-linecap="round"/></svg>
</div></body></html>
